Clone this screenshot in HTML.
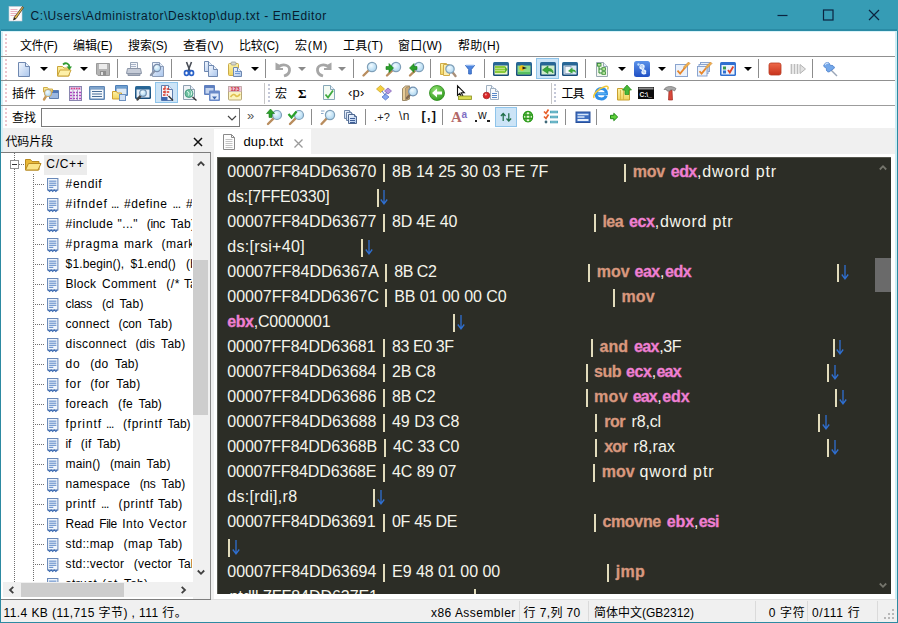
<!DOCTYPE html>
<html><head><meta charset="utf-8"><title>EmEditor</title>
<style>html,body{margin:0;padding:0}body{width:898px;height:623px;position:relative;overflow:hidden;background:#fff;font-family:"Liberation Sans","Noto Sans CJK SC",sans-serif}svg{display:block;overflow:visible}</style>
</head><body>

<svg width="0" height="0" style="position:absolute"><defs>
<linearGradient id="gDoc" x1="0" y1="0" x2="1" y2="1"><stop offset="0" stop-color="#f4f8fe"/><stop offset="1" stop-color="#a9c5ec"/></linearGradient>
<linearGradient id="gFold" x1="0" y1="0" x2="0" y2="1"><stop offset="0" stop-color="#fdf2a6"/><stop offset="1" stop-color="#f0d45e"/></linearGradient>
<linearGradient id="gWin" x1="0" y1="0" x2="0" y2="1"><stop offset="0" stop-color="#2a6a9a"/><stop offset="1" stop-color="#174a78"/></linearGradient>
<linearGradient id="gGreen" x1="0" y1="0" x2="0" y2="1"><stop offset="0" stop-color="#9be08a"/><stop offset="1" stop-color="#3fae3a"/></linearGradient>
<linearGradient id="gBlue" x1="0" y1="0" x2="0" y2="1"><stop offset="0" stop-color="#5b93ea"/><stop offset="1" stop-color="#1f4fc4"/></linearGradient>
<linearGradient id="gRed" x1="0" y1="0" x2="0" y2="1"><stop offset="0" stop-color="#ee6a4a"/><stop offset="1" stop-color="#c8321c"/></linearGradient>
<radialGradient id="gLens" cx="0.4" cy="0.35" r="0.7"><stop offset="0" stop-color="#f2fbff"/><stop offset="1" stop-color="#a8d4f0"/></radialGradient>
<radialGradient id="gBall" cx="0.4" cy="0.3" r="0.8"><stop offset="0" stop-color="#8fe070"/><stop offset="1" stop-color="#2a9418"/></radialGradient>
</defs></svg>

<div style="position:absolute;left:0px;top:0px;width:898px;height:623px;background:#369cb5;"></div>
<div style="position:absolute;left:0px;top:31px;width:898px;height:592px;background:#2d8aa2;"></div>
<div style="position:absolute;left:1px;top:31px;width:896px;height:590.5px;background:#ffffff;"></div>
<div style="position:absolute;left:1px;top:31px;width:1.5px;height:590.5px;background:#d4f0f7;"></div>
<svg style="position:absolute;left:8px;top:6px" width="16" height="16" viewBox="0 0 16 16"><rect x="1" y="0.500" width="13" height="14.500" fill="#fbfbfb" stroke="#c8ccd8" stroke-width=".6"/><path d="M2.500 3.500h7M2.500 5.500h7M2.500 7.500h6M2.500 9.500h5" stroke="#e8a8b8" stroke-width=".9"/><path d="M14.500 .5l1 1.200-7.500 11-2.500 1.300.8-2.800z" fill="#e8b84a" stroke="#4a3a2a" stroke-width=".8"/><path d="M5.500 14l2.500-1.300-1.700-1.500z" fill="#222"/></svg>
<span style='position:absolute;white-space:pre;left:30.5px;font:normal 12px/1 "Liberation Sans","Noto Sans CJK SC",sans-serif;color:#071a2e;top:10.14px;letter-spacing:0.589px;'>C:\Users\Administrator\Desktop\dup.txt - EmEditor</span>
<svg style="position:absolute;left:777px;top:9px" width="104" height="12" viewBox="0 0 104 12"><g fill="none" stroke="#0b2440" stroke-width="1.200"><path d="M0.500 6.500h10"/><rect x="46.500" y="1" width="9.500" height="10"/><path d="M92 1l10 10M102 1l-10 10"/></g></svg>
<div style="position:absolute;left:1px;top:29px;width:896px;height:2px;background:rgba(20,110,135,0.35);"></div>
<div style="position:absolute;left:1px;top:31px;width:896px;height:1px;background:#d9f3f9;"></div>
<div style="position:absolute;left:5px;top:34px;width:2px;height:21px;background:repeating-linear-gradient(to bottom,#ecc6ce 0 2px,transparent 2px 4px)"></div>
<span style='position:absolute;white-space:pre;left:20px;font:normal 12px/1 "Liberation Sans","Noto Sans CJK SC",sans-serif;color:#000;top:39.64px;letter-spacing:-0.406px;'>文件(F)</span>
<span style='position:absolute;white-space:pre;left:73px;font:normal 12px/1 "Liberation Sans","Noto Sans CJK SC",sans-serif;color:#000;top:39.64px;letter-spacing:-0.111px;'>编辑(E)</span>
<span style='position:absolute;white-space:pre;left:128px;font:normal 12px/1 "Liberation Sans","Noto Sans CJK SC",sans-serif;color:#000;top:39.64px;letter-spacing:-0.111px;'>搜索(S)</span>
<span style='position:absolute;white-space:pre;left:183px;font:normal 12px/1 "Liberation Sans","Noto Sans CJK SC",sans-serif;color:#000;top:39.64px;letter-spacing:0.111px;'>查看(V)</span>
<span style='position:absolute;white-space:pre;left:239px;font:normal 12px/1 "Liberation Sans","Noto Sans CJK SC",sans-serif;color:#000;top:39.64px;letter-spacing:-0.149px;'>比较(C)</span>
<span style='position:absolute;white-space:pre;left:295px;font:normal 12px/1 "Liberation Sans","Noto Sans CJK SC",sans-serif;color:#000;top:39.64px;letter-spacing:0.714px;'>宏(M)</span>
<span style='position:absolute;white-space:pre;left:343px;font:normal 12px/1 "Liberation Sans","Noto Sans CJK SC",sans-serif;color:#000;top:39.64px;letter-spacing:0.149px;'>工具(T)</span>
<span style='position:absolute;white-space:pre;left:398px;font:normal 12px/1 "Liberation Sans","Noto Sans CJK SC",sans-serif;color:#000;top:39.64px;letter-spacing:0.149px;'>窗口(W)</span>
<span style='position:absolute;white-space:pre;left:458px;font:normal 12px/1 "Liberation Sans","Noto Sans CJK SC",sans-serif;color:#000;top:39.64px;letter-spacing:0.295px;'>帮助(H)</span>
<div style="position:absolute;left:1px;top:56px;width:896px;height:1px;background:#909090;"></div>
<div style="position:absolute;left:5px;top:59px;width:2px;height:21px;background:repeating-linear-gradient(to bottom,#ecc6ce 0 2px,transparent 2px 4px)"></div>
<svg style="position:absolute;left:16px;top:61px" width="16" height="16" viewBox="0 0 16 16"><path d="M2.5 1.5h7l4 4v10h-11z" fill="url(#gDoc)" stroke="#6f88b0"/><path d="M9.5 1.5v4h4" fill="#e8f0fb" stroke="#6f88b0"/></svg>
<svg style="position:absolute;left:55.5px;top:61px" width="16" height="16" viewBox="0 0 16 16"><path d="M1.5 5.5h5l1.5 1.5h5v8h-11.5z" fill="url(#gFold)" stroke="#caa43a"/><path d="M1.5 15l2.5-6h11l-2.5 6z" fill="#fdf0a8" stroke="#caa43a"/><path d="M7 3.5c3-2.5 6-1 6.5 2.5" fill="none" stroke="#2f9a2f" stroke-width="1.8"/><path d="M10.5 5.5h5.5l-2.5 3.5z" fill="#2f9a2f"/></svg>
<svg style="position:absolute;left:95px;top:61px" width="16" height="16" viewBox="0 0 16 16"><path d="M1.5 2.5h13v12h-11.5l-1.5-1.5z" fill="#b4b4b4" stroke="#9a9a9a"/><rect x="4" y="3" width="8" height="5" fill="#ececec"/><rect x="5" y="10" width="6" height="4.5" fill="#8e8e8e"/><rect x="6" y="11" width="2" height="3" fill="#e0e0e0"/></svg>
<svg style="position:absolute;left:125.5px;top:61px" width="16" height="16" viewBox="0 0 16 16"><path d="M4.5 1.5h7v6h-7z" fill="#f4f6fa" stroke="#9aa6b8"/><path d="M1.5 7.500h13l1 5h-15z" fill="#c6ccd8" stroke="#8c96a8"/><path d="M2 12.5h12v2h-12z" fill="#a9b0be" stroke="#8c96a8"/><path d="M5 3.5h5M5 5.500h5" stroke="#a8b4c8"/></svg>
<svg style="position:absolute;left:148.5px;top:61px" width="16" height="16" viewBox="0 0 16 16"><path d="M3.5 1.5h7l4 4v10h-11z" fill="url(#gDoc)" stroke="#8b9cb8"/><path d="M10.5 1.5v4h4" fill="#e8f0fb" stroke="#8b9cb8"/><path d="M5.9 9.45L2 14" stroke="#8b96aa" stroke-width="2.4" stroke-linecap="round"/><circle cx="8" cy="7" r="3.6" fill="url(#gLens)" stroke="#7a8cab" stroke-width="1.2"/></svg>
<svg style="position:absolute;left:180.5px;top:61px" width="16" height="16" viewBox="0 0 16 16"><path d="M5.500 1l3.500 9M10.500 1l-3.500 9" stroke="#4a4f58" stroke-width="1.6" fill="none"/><ellipse cx="5.500" cy="12" rx="2" ry="2.400" fill="none" stroke="#2a62c8" stroke-width="1.7"/><ellipse cx="10.500" cy="12" rx="2" ry="2.400" fill="none" stroke="#2a62c8" stroke-width="1.7"/></svg>
<svg style="position:absolute;left:203px;top:61px" width="16" height="16" viewBox="0 0 16 16"><path d="M1.5 0.5h4l4 4v6h-8z" fill="url(#gDoc)" stroke="#6f88b0"/><path d="M5.5 0.5v4h4" fill="#e8f0fb" stroke="#6f88b0"/><path d="M5.5 4.5h5l4 4v7h-9z" fill="url(#gDoc)" stroke="#6f88b0"/><path d="M10.5 4.5v4h4" fill="#e8f0fb" stroke="#6f88b0"/></svg>
<svg style="position:absolute;left:226.5px;top:61px" width="16" height="16" viewBox="0 0 16 16"><rect x="1.500" y="2.500" width="10" height="12" rx="1" fill="url(#gFold)" stroke="#c9aa4a"/><rect x="4" y="1" width="5" height="3" rx="1" fill="#d8d8d0" stroke="#9a9a90" stroke-width=".8"/><path d="M6.5 6.5h4l4 4v5h-8z" fill="url(#gDoc)" stroke="#6f88b0"/><path d="M10.5 6.5v4h4" fill="#e8f0fb" stroke="#6f88b0"/><path d="M8 10.500h5M8 12.500h5" stroke="#6f9ad8"/></svg>
<svg style="position:absolute;left:274.5px;top:61px" width="16" height="16" viewBox="0 0 16 16"><g ><path d="M3.500 6c4.500-3.800 11.500-2 11 3.500c-.3 2.800-3 4.800-5.500 5.500" fill="none" stroke="#a6a6a6" stroke-width="2.800"/><path d="M.5 1.500v7.500h7.500v-2h-4l2-2.500z" fill="#a6a6a6"/></g></svg>
<svg style="position:absolute;left:315.5px;top:61px" width="16" height="16" viewBox="0 0 16 16"><g transform="translate(16 0) scale(-1 1)"><path d="M3.500 6c4.500-3.800 11.500-2 11 3.500c-.3 2.800-3 4.800-5.500 5.500" fill="none" stroke="#a6a6a6" stroke-width="2.800"/><path d="M.5 1.500v7.500h7.500v-2h-4l2-2.500z" fill="#a6a6a6"/></g></svg>
<svg style="position:absolute;left:361.5px;top:61px" width="16" height="16" viewBox="0 0 16 16"><path d="M7.025 8.975L1.5 14.5" stroke="#b98d5e" stroke-width="2.4" stroke-linecap="round"/><circle cx="10" cy="6" r="4.6" fill="url(#gLens)" stroke="#7f9fb8" stroke-width="1.2"/></svg>
<svg style="position:absolute;left:384.5px;top:61px" width="16" height="16" viewBox="0 0 16 16"><path d="M7.85 8.975L2 14.5" stroke="#b98d5e" stroke-width="2.4" stroke-linecap="round"/><circle cx="11" cy="6" r="4.6" fill="url(#gLens)" stroke="#7f9fb8" stroke-width="1.2"/><path d="M1 5.500h3v-3l4.500 4.500-4.500 4.500v-3h-3z" fill="#2aa02a" stroke="#167a16" stroke-width=".6"/></svg>
<svg style="position:absolute;left:407.5px;top:61px" width="16" height="16" viewBox="0 0 16 16"><path d="M7.85 8.975L2 14.5" stroke="#b98d5e" stroke-width="2.4" stroke-linecap="round"/><circle cx="11" cy="6" r="4.6" fill="url(#gLens)" stroke="#7f9fb8" stroke-width="1.2"/><path d="M9 5.500h-3v-3l-4.500 4.500 4.500 4.500v-3h3z" fill="#2aa02a" stroke="#167a16" stroke-width=".6"/></svg>
<svg style="position:absolute;left:439.5px;top:61px" width="16" height="16" viewBox="0 0 16 16"><path d="M.5 2.500h6v11h-6z" fill="url(#gFold)" stroke="#d0ac48"/><path d="M3.500 3.500h6v11h-6z" fill="#fbeeb0" stroke="#d0ac48"/><path d="M11.925 10.45L15.5 15" stroke="#a88e78" stroke-width="2.4" stroke-linecap="round"/><circle cx="10" cy="8" r="4.2" fill="url(#gLens)" stroke="#7f9fb8" stroke-width="1.2"/></svg>
<svg style="position:absolute;left:462px;top:61px" width="16" height="16" viewBox="0 0 16 16"><path d="M3.500 4.500h9l-3.200 4v4.500h-2.600v-4.500z" fill="#4d86e0" stroke="#2f62b8" stroke-width=".9"/><path d="M4 4.300h8" stroke="#9cc0f5" stroke-width="1.200"/></svg>
<svg style="position:absolute;left:493px;top:61px" width="16" height="16" viewBox="0 0 16 16"><rect x="0" y="1" width="16" height="14" rx="1.5" fill="url(#gWin)"/><rect x="1.5" y="4.5" width="13" height="9" fill="#eaf6c8"/><path d="M2 6h10M2 8.500h10M2 11h10" stroke="#8ccc3a" stroke-width="1.800"/><path d="M12 5v7l2.500-3.500z" fill="#58b030"/></svg>
<svg style="position:absolute;left:516px;top:61px" width="16" height="16" viewBox="0 0 16 16"><rect x="0" y="1" width="16" height="14" rx="1.5" fill="url(#gWin)"/><rect x="1.5" y="4.5" width="13" height="9" fill="#8fdc8a"/><circle cx="6" cy="7" r="2.700" fill="#f2c21a"/><path d="M6.500 5.500l4.500 1.500-4.500 1.500z" fill="#222"/><path d="M2 11h12v2h-12z" fill="#58c060"/></svg>
<svg style="position:absolute;left:562px;top:61px" width="16" height="16" viewBox="0 0 16 16"><rect x="0" y="1" width="16" height="14" rx="1.5" fill="url(#gWin)"/><rect x="1.5" y="4.5" width="13" height="9" fill="#d8e6f2"/><rect x="3" y="5.500" width="6" height="7" fill="#f4f8fc" stroke="#8aa0ba" stroke-width=".8"/><path d="M6 10l4.500-3.500v2c2.500 0 3.500 1 3.500 3.500-1-1-1.800-1.400-3.500-1.400v2z" fill="#3aa83a"/></svg>
<svg style="position:absolute;left:594px;top:61px" width="16" height="16" viewBox="0 0 16 16"><path d="M2.5 1.5h7l4 4v10h-11z" fill="#f2f6ee" stroke="#98a8b0"/><path d="M9.5 1.5v4h4" fill="#e8f0fb" stroke="#98a8b0"/><path d="M5 4v8h3M5 8h3" fill="none" stroke="#2c8a2c"/><rect x="3.500" y="2.500" width="3.500" height="2.600" fill="#bfe8a0" stroke="#2c8a2c" stroke-width=".8"/><rect x="8" y="6.700" width="3.500" height="2.600" fill="#bfe8a0" stroke="#2c8a2c" stroke-width=".8"/><rect x="8" y="10.700" width="3.500" height="2.600" fill="#bfe8a0" stroke="#2c8a2c" stroke-width=".8"/></svg>
<svg style="position:absolute;left:634px;top:61px" width="16" height="16" viewBox="0 0 16 16"><rect x="0" y="0" width="16" height="16" rx="2.500" fill="url(#gBlue)"/><path d="M6 4.500c2-1.500 4.500-.5 4 1.500h-4c0 2 2.500 2.500 4 1.200M8 9.500c2-1 4 0 3.500 1.500h-3.500c0 2 2.500 2.200 4 1" fill="none" stroke="#e8f4ff" stroke-width="1.500"/><circle cx="4.500" cy="3.500" r="1.200" fill="#bfe0ff"/></svg>
<svg style="position:absolute;left:673.5px;top:61px" width="16" height="16" viewBox="0 0 16 16"><rect x="1.5" y="3.5" width="12" height="12" fill="#eaf1fb" stroke="#8aa4cf"/><path d="M3.5 9.600000000000001l2.64 3.0l5.4-6.6000000000000005" fill="none" stroke="#e8862a" stroke-width="1.800"/><path d="M10 5.500l4.500-4.500 1.500 1.500-4.500 4.500-2 .5z" fill="#f2b04a" stroke="#c8843a" stroke-width=".6"/></svg>
<svg style="position:absolute;left:695.5px;top:61px" width="16" height="16" viewBox="0 0 16 16"><rect x="4.5" y="1.5" width="9" height="9" fill="#eaf1fb" stroke="#8aa4cf"/><path d="M6.5 5.95l1.98 2.25l4.05-4.95" fill="none" stroke="#e8862a" stroke-width="1.800"/><rect x="3.0" y="3.5" width="9" height="9" fill="#eaf1fb" stroke="#8aa4cf"/><path d="M5.0 7.95l1.98 2.25l4.05-4.95" fill="none" stroke="#e8862a" stroke-width="1.800"/><rect x="1.5" y="5.5" width="9.5" height="9.5" fill="#eaf1fb" stroke="#8aa4cf"/><path d="M3.5 10.225000000000001l2.09 2.375l4.275-5.2250000000000005" fill="none" stroke="#e8862a" stroke-width="1.800"/><path d="M10 5.500l4.500-4.500 1.500 1.500-4.500 4.500-2 .5z" fill="#f2b04a" stroke="#c8843a" stroke-width=".6"/></svg>
<svg style="position:absolute;left:720px;top:61px" width="16" height="16" viewBox="0 0 16 16"><rect x="0" y="1" width="16" height="14" rx="1.500" fill="#2f6fd0"/><rect x="1.500" y="4" width="13" height="9.500" fill="#eaf2fc"/><rect x="3" y="5.500" width="3" height="3" fill="#3a9a4a"/><rect x="3" y="9.500" width="3" height="3" fill="#2f6fd0"/><path d="M8 9l1.800 2.500 3.500-6" fill="none" stroke="#e0452a" stroke-width="1.800"/></svg>
<svg style="position:absolute;left:767px;top:61px" width="16" height="16" viewBox="0 0 16 16"><rect x="2" y="2" width="12" height="12" rx="2" fill="url(#gRed)" stroke="#b83a22" stroke-width=".8"/></svg>
<svg style="position:absolute;left:789.5px;top:61px" width="16" height="16" viewBox="0 0 16 16"><path d="M1.500 3v10M4.500 3v10M7.500 3v10" stroke="#bcbcbc" stroke-width="1.700"/><path d="M10 3.500l5.500 4.500-5.500 4.500z" fill="#e2e2e2" stroke="#b4b4b4"/></svg>
<svg style="position:absolute;left:821.5px;top:61px" width="16" height="16" viewBox="0 0 16 16"><path d="M9 9l6 6" stroke="#9aa6b8" stroke-width="1.400"/><path d="M2 4c1-2.500 3.500-3 5-2l1.500 2.500c2-.5 3.500.5 4 2.500l-5.500 4c-2 0-3-1.500-2.500-3.500l-2-1.500c-1-.5-1-1.500-.5-2z" fill="#74a8ea" stroke="#4a7cc8" stroke-width=".8"/><path d="M3 4c1-1.500 2.500-2 3.500-1.500" stroke="#cfe2fa" stroke-width="1.200" fill="none"/></svg>
<div style="position:absolute;left:536px;top:58px;width:23px;height:21px;background:#cce4f7;box-sizing:border-box;border:1px solid #8fc4ea"></div>
<svg style="position:absolute;left:540px;top:61px" width="16" height="16" viewBox="0 0 16 16"><rect x="0" y="1" width="16" height="14" rx="1.5" fill="url(#gWin)"/><rect x="1.5" y="4.5" width="13" height="9" fill="#cfeccc"/><path d="M2.500 9l5.500-4v2.500c4 0 5 1.500 5 4.500-1-1.500-2-2-5-2v2.500z" fill="#3aa83a" stroke="#1f7f2a" stroke-width=".6"/></svg>
<svg style="position:absolute;left:39.7px;top:66.7px" width="8" height="4" viewBox="0 0 8 4"><path d="M0 0h8l-4 4z" fill="#000"/></svg>
<svg style="position:absolute;left:80px;top:66.7px" width="8" height="4" viewBox="0 0 8 4"><path d="M0 0h8l-4 4z" fill="#000"/></svg>
<svg style="position:absolute;left:250.8px;top:66.7px" width="8" height="4" viewBox="0 0 8 4"><path d="M0 0h8l-4 4z" fill="#000"/></svg>
<svg style="position:absolute;left:298.3px;top:66.7px" width="8" height="4" viewBox="0 0 8 4"><path d="M0 0h8l-4 4z" fill="#8a8a8a"/></svg>
<svg style="position:absolute;left:338px;top:66.7px" width="8" height="4" viewBox="0 0 8 4"><path d="M0 0h8l-4 4z" fill="#8a8a8a"/></svg>
<svg style="position:absolute;left:617.5px;top:66.7px" width="8" height="4" viewBox="0 0 8 4"><path d="M0 0h8l-4 4z" fill="#000"/></svg>
<svg style="position:absolute;left:657.5px;top:66.7px" width="8" height="4" viewBox="0 0 8 4"><path d="M0 0h8l-4 4z" fill="#000"/></svg>
<svg style="position:absolute;left:743.5px;top:66.7px" width="8" height="4" viewBox="0 0 8 4"><path d="M0 0h8l-4 4z" fill="#000"/></svg>
<div style="position:absolute;left:117px;top:59px;width:1px;height:19px;background:#8c8c8c;"></div>
<div style="position:absolute;left:171px;top:59px;width:1px;height:19px;background:#8c8c8c;"></div>
<div style="position:absolute;left:264.8px;top:59px;width:1px;height:19px;background:#8c8c8c;"></div>
<div style="position:absolute;left:352.8px;top:59px;width:1px;height:19px;background:#8c8c8c;"></div>
<div style="position:absolute;left:430px;top:59px;width:1px;height:19px;background:#8c8c8c;"></div>
<div style="position:absolute;left:484.2px;top:59px;width:1px;height:19px;background:#8c8c8c;"></div>
<div style="position:absolute;left:584.5px;top:59px;width:1px;height:19px;background:#8c8c8c;"></div>
<div style="position:absolute;left:758.1px;top:59px;width:1px;height:19px;background:#8c8c8c;"></div>
<div style="position:absolute;left:812px;top:59px;width:1px;height:19px;background:#8c8c8c;"></div>
<div style="position:absolute;left:1px;top:80px;width:896px;height:1px;background:#909090;"></div>
<div style="position:absolute;left:5px;top:84px;width:2px;height:20px;background:repeating-linear-gradient(to bottom,#ecc6ce 0 2px,transparent 2px 4px)"></div>
<span style='position:absolute;white-space:pre;left:12px;font:normal 12px/1 "Liberation Sans","Noto Sans CJK SC",sans-serif;color:#000;top:88.04px;letter-spacing:-0.010px;'>插件</span>
<svg style="position:absolute;left:42.5px;top:85px" width="16" height="16" viewBox="0 0 16 16"><path d="M6.500 5.500h9v8h-9z" fill="#9cb8e0" stroke="#5f7fb0"/><path d="M7 6h8v2h-8z" fill="#4f78b8"/><path d="M.5 2.500h4l1 1.500h4v3h-9z" fill="url(#gFold)" stroke="#d0ac48"/><path d="M3.6 10.275L1 14.5" stroke="#c89858" stroke-width="2.4" stroke-linecap="round"/><circle cx="5" cy="8" r="3.5" fill="url(#gLens)" stroke="#c8a868" stroke-width="1.2"/></svg>
<svg style="position:absolute;left:66.5px;top:85px" width="16" height="16" viewBox="0 0 16 16"><rect x="2.500" y="1.500" width="12" height="14" fill="#f6eefa" stroke="#8a86b0"/><path d="M3 2h11v3h-11z" fill="#d8c0e8"/><path d="M3 7.500h11M3 10.500h11M3 13.500h11" stroke="#b040c0" stroke-width="1.300" stroke-dasharray="2 1"/><path d="M6 5v10M10.500 5v10" stroke="#8a86b0" stroke-width=".7"/><path d="M4 3.500h9" stroke="#e04080" stroke-width="1.400" stroke-dasharray="1.500 1"/></svg>
<svg style="position:absolute;left:89px;top:85px" width="16" height="16" viewBox="0 0 16 16"><rect x="0" y="1" width="16" height="14" rx="1.2" fill="#5f86b4"/><rect x="1" y="2" width="14" height="2" fill="#7fa4cc"/><rect x="1.5" y="4.5" width="13" height="9" fill="#f4f8fc"/><path d="M3 6.500h10M3 9h10M3 11.500h10" stroke="#4a6e98" stroke-width="1.100"/></svg>
<svg style="position:absolute;left:112px;top:85px" width="16" height="16" viewBox="0 0 16 16"><rect x="3" y="0" width="13" height="11" rx="1.2" fill="#4f7fb8"/><rect x="4" y="1" width="11" height="2" fill="#6fa0d0"/><rect x="4.5" y="3.5" width="10" height="6" fill="#dce9f5"/><path d="M.5 6.500h4l1 1.500h4v6h-9z" fill="url(#gFold)" stroke="#d0a030"/><rect x="7.500" y="9.500" width="6" height="6" fill="#cfe0f4" stroke="#6f92c0"/></svg>
<svg style="position:absolute;left:134.5px;top:85px" width="16" height="16" viewBox="0 0 16 16"><rect x="0" y="1" width="16" height="13" rx="1.5" fill="url(#gWin)"/><rect x="1.5" y="4.5" width="13" height="8" fill="#e4eef8"/><path d="M6.075 10.275L2.5 14.5" stroke="#444" stroke-width="2.4" stroke-linecap="round"/><circle cx="8" cy="8" r="3.3" fill="url(#gLens)" stroke="#6f8fb0" stroke-width="1.2"/></svg>
<svg style="position:absolute;left:181.5px;top:85px" width="16" height="16" viewBox="0 0 16 16"><path d="M1.5 0.5h7l4 4v10h-11z" fill="#eef2f6" stroke="#8fa0b0"/><path d="M8.5 0.5v4h4" fill="#e8f0fb" stroke="#8fa0b0"/><circle cx="7" cy="8.500" r="4" fill="#6cc0a0" stroke="#3f9078" stroke-width=".8"/><path d="M5 6.500c2 .5 2.500 2 1.500 4M8.500 5.500c1.500 1 1.500 3 .5 5" stroke="#e8fff4" stroke-width="1" fill="none"/><path d="M10.500 12l4 3.500" stroke="#333" stroke-width="1.400"/></svg>
<svg style="position:absolute;left:204px;top:85px" width="16" height="16" viewBox="0 0 16 16"><rect x="0" y="0" width="11" height="10" rx="1" fill="#5f80c0"/><rect x="1.500" y="3" width="8" height="5.500" fill="#c4d4ee"/><rect x="5" y="5.500" width="11" height="10.500" rx="1" fill="#6a8ac8"/><rect x="6.500" y="8.500" width="8" height="6" fill="#e0eafa"/><path d="M8 11.500h5l-2.500 3z" fill="#3f68b0"/></svg>
<svg style="position:absolute;left:227px;top:85px" width="16" height="16" viewBox="0 0 16 16"><rect x="1.500" y="1.500" width="13" height="13.500" rx="1" fill="#fbf3c0" stroke="#b8a878"/><rect x="1.500" y="1.500" width="13" height="5" fill="#f4c8d8" stroke="#b8a0a8" stroke-width=".6"/><text x="8" y="6.200" font-family="Liberation Sans,sans-serif" font-size="5.500" font-weight="bold" fill="#c0283a" text-anchor="middle">123</text><path d="M3.500 12c2-3 4-3 5-1.500s3 1 4.500-1.500" fill="none" stroke="#e0c050" stroke-width="1.600"/></svg>
<svg style="position:absolute;left:320.5px;top:85px" width="16" height="16" viewBox="0 0 16 16"><path d="M2.5 0.5h7l4 4v10h-11z" fill="#f4fbf4" stroke="#88a8b8"/><path d="M9.5 0.5v4h4" fill="#e8f0fb" stroke="#88a8b8"/><path d="M4.500 9.500l2.500 3 5-7" fill="none" stroke="#3faa3f" stroke-width="1.800"/></svg>
<svg style="position:absolute;left:375.5px;top:85px" width="16" height="16" viewBox="0 0 16 16"><path d="M4.500 .5l4 3.500-4 3.500-4-3.500z" fill="#f4d040" stroke="#c8a020" stroke-width=".7"/><path d="M12 3l3.500 3-3.500 3-3.500-3z" fill="#b898e0" stroke="#7858b0" stroke-width=".7"/><path d="M9.500 9l3.500 3-3.500 3-3.500-3z" fill="#88a8f0" stroke="#4868c0" stroke-width=".7"/><path d="M6 6l3 4M10.500 7.500l-1 2" stroke="#5878c8" stroke-width="1"/></svg>
<svg style="position:absolute;left:401.5px;top:85px" width="16" height="16" viewBox="0 0 16 16"><path d="M.5 3.500l3-2.500h4v13l-4 1.500h-3z" fill="#e8cc98" stroke="#9a8868"/><path d="M3.500 3l4-2v13l-4 1.500z" fill="#c8a878" stroke="#9a8868" stroke-width=".7"/><path d="M8.9 8.775L5 13" stroke="#806850" stroke-width="2.4" stroke-linecap="round"/><circle cx="11" cy="6.5" r="4.3" fill="url(#gLens)" stroke="#7090b0" stroke-width="1.2"/></svg>
<svg style="position:absolute;left:428.7px;top:85px" width="16" height="16" viewBox="0 0 16 16"><circle cx="8" cy="8" r="7.500" fill="url(#gBall)" stroke="#2a8a18" stroke-width=".8"/><path d="M3 8l5-4.500v3h5v3h-5v3z" fill="#fff"/></svg>
<svg style="position:absolute;left:455.5px;top:85px" width="16" height="16" viewBox="0 0 16 16"><path d="M1.500 .8v9.500l2.300-2 1.700 3.700 1.500-.7-1.700-3.600h3z" fill="#fff" stroke="#111" stroke-width="1.100"/><rect x="2.500" y="11" width="13" height="3.500" fill="#d8dc50" stroke="#8a9020" stroke-width=".8"/></svg>
<svg style="position:absolute;left:483.3px;top:85px" width="16" height="16" viewBox="0 0 16 16"><path d="M3.5 0.5h5l3 3v7h-8z" fill="#f8fafc" stroke="#a0b0c0"/><path d="M8.5 0.5v3h3" fill="#e8f0fb" stroke="#a0b0c0"/><path d="M7.5 3.5h5l3 3v8h-8z" fill="#f8fafc" stroke="#a0b0c0"/><path d="M12.5 3.5v3h3" fill="#e8f0fb" stroke="#a0b0c0"/><path d="M9 8.500h5M9 10.500h5M9 12.500h5" stroke="#5888c8"/><circle cx="3.500" cy="10.500" r="3.300" fill="#d8282a" stroke="#a01818" stroke-width=".7"/><circle cx="2.800" cy="9.500" r="1" fill="#f8a0a0"/></svg>
<svg style="position:absolute;left:592.5px;top:85px" width="16" height="16" viewBox="0 0 16 16"><path d="M4.200 8.700h9.300c.3-7-10.500-7-10.500 0c0 6.500 8.500 6.500 10.200 2" fill="none" stroke="#2f8fe8" stroke-width="3"/><path d="M4.200 8.700h9.300" stroke="#5fb4f4" stroke-width="1.200"/><path d="M1 13c-1.500-3 4-9.500 11-11.500c3-.8 4 .8 2.500 3" fill="none" stroke="#f0c83a" stroke-width="1.500"/></svg>
<svg style="position:absolute;left:616px;top:85px" width="16" height="16" viewBox="0 0 16 16"><path d="M1.500 3.500h5l1 1.500h6v10h-12z" fill="url(#gFold)" stroke="#c8a030"/><path d="M4.500 5v10M7.500 5v10" stroke="#d8b040" stroke-width=".8"/><path d="M11 0l4.500 5h-2.500v4.500h-4v-4.500h-2.500z" fill="#48b838" stroke="#2a8a20" stroke-width=".7"/></svg>
<svg style="position:absolute;left:638px;top:85px" width="16" height="16" viewBox="0 0 16 16"><rect x="0" y="2" width="16" height="12" fill="#0c0c0c"/><rect x=".5" y="2.500" width="15" height="2" fill="#8a8a8a"/><text x="1.500" y="11.800" font-family="Liberation Sans,sans-serif" font-size="6.500" font-weight="bold" fill="#f4f4f4">C:\_</text></svg>
<svg style="position:absolute;left:661.5px;top:85px" width="16" height="16" viewBox="0 0 16 16"><path d="M7 5h3l.5 10h-4z" fill="#d8483a" stroke="#a02a20" stroke-width=".7"/><path d="M2 4.500c2-3.500 8-4 12-1l-1.500 2.500c-1.500-1.200-3-1.500-4-1.200l-.5 1.200h-3l-.5-1.500z" fill="#a8a8a8" stroke="#707070" stroke-width=".7"/></svg>
<div style="position:absolute;left:155px;top:82px;width:23px;height:21px;background:#cce4f7;box-sizing:border-box;border:1px solid #8fc4ea"></div>
<svg style="position:absolute;left:158.5px;top:85px" width="16" height="16" viewBox="0 0 16 16"><path d="M2.5 0.5h7l4 4v11h-11z" fill="#f4f6fb" stroke="#5f7fb0"/><path d="M9.5 0.5v4h4" fill="#e8f0fb" stroke="#5f7fb0"/><path d="M4 4h7M4 7h7M4 10h5" stroke="#d83a2a" stroke-width="1.600" stroke-dasharray="2.500 1.200"/><rect x="2.500" y="12" width="6" height="3.500" fill="#3f68b0"/><path d="M9.500 11l4.500 4.500" stroke="#333" stroke-width="1.400"/><path d="M6 1v3M6 5.500v3" stroke="#d83a2a" stroke-width="1.200"/></svg>
<div style="position:absolute;left:264px;top:83px;width:1px;height:21px;background:#c6c6c6;"></div>
<div style="position:absolute;left:268px;top:84px;width:2px;height:20px;background:repeating-linear-gradient(to bottom,#c4c8d8 0 2px,transparent 2px 4px)"></div>
<span style='position:absolute;white-space:pre;left:275px;font:normal 12px/1 "Liberation Sans","Noto Sans CJK SC",sans-serif;color:#000;top:88.04px;letter-spacing:-0.016px;'>宏</span>
<span style='position:absolute;white-space:pre;left:298px;font:bold 13px/1 "Liberation Serif",serif;color:#000;top:86.91px;letter-spacing:-0.700px;'>Σ</span>
<span style='position:absolute;white-space:pre;left:348px;font:normal 13px/1 "Liberation Sans","Noto Sans CJK SC",sans-serif;color:#111;top:86.00px;letter-spacing:0.164px;'>‹p›</span>
<div style="position:absolute;left:550.5px;top:83px;width:1px;height:21px;background:#c6c6c6;"></div>
<div style="position:absolute;left:554px;top:84px;width:2px;height:20px;background:repeating-linear-gradient(to bottom,#c4c8d8 0 2px,transparent 2px 4px)"></div>
<span style='position:absolute;white-space:pre;left:561.5px;font:normal 12px/1 "Liberation Sans","Noto Sans CJK SC",sans-serif;color:#000;top:88.04px;letter-spacing:-1.010px;'>工具</span>
<div style="position:absolute;left:1px;top:105px;width:896px;height:1px;background:#9c9c9c;"></div>
<div style="position:absolute;left:5px;top:108px;width:2px;height:19px;background:repeating-linear-gradient(to bottom,#ecc6ce 0 2px,transparent 2px 4px)"></div>
<span style='position:absolute;white-space:pre;left:12px;font:normal 12px/1 "Liberation Sans","Noto Sans CJK SC",sans-serif;color:#000;top:112.04px;letter-spacing:-0.010px;'>查找</span>
<div style="position:absolute;left:40.5px;top:107.5px;width:199.5px;height:19.5px;background:#fff;box-sizing:border-box;border:1px solid #7a7a7a"></div>
<svg style="position:absolute;left:226.5px;top:114.5px" width="10" height="6" viewBox="0 0 10 6"><path d="M1 1l4 4 4-4" fill="none" stroke="#444" stroke-width="1.200"/></svg>
<span style='position:absolute;white-space:pre;left:247px;font:normal 13px/1 "Liberation Sans","Noto Sans CJK SC",sans-serif;color:#555;top:109.00px;letter-spacing:-0.234px;'>»</span>
<svg style="position:absolute;left:265.5px;top:109px" width="16" height="16" viewBox="0 0 16 16"><path d="M7.85 9.15L2 15" stroke="#b98d5e" stroke-width="2.4" stroke-linecap="round"/><circle cx="11" cy="6" r="4.5" fill="url(#gLens)" stroke="#7f9fb8" stroke-width="1.2"/><path d="M4.500 0l4 4.500h-2.500v4h-3v-4h-2.500z" fill="#2aa02a" stroke="#167a16" stroke-width=".6"/></svg>
<svg style="position:absolute;left:288px;top:109px" width="16" height="16" viewBox="0 0 16 16"><path d="M7.85 9.15L2 15" stroke="#b98d5e" stroke-width="2.4" stroke-linecap="round"/><circle cx="11" cy="6" r="4.5" fill="url(#gLens)" stroke="#7f9fb8" stroke-width="1.2"/><path d="M.5 5l3 3.500 5-6" fill="none" stroke="#2aa02a" stroke-width="2.200"/></svg>
<svg style="position:absolute;left:319.5px;top:109px" width="16" height="16" viewBox="0 0 16 16"><path d="M7.025 9.15L1.5 15" stroke="#b98d5e" stroke-width="2.4" stroke-linecap="round"/><circle cx="10" cy="6" r="4.6" fill="url(#gLens)" stroke="#7f9fb8" stroke-width="1.2"/><path d="M1 2h3.500M1 4.500h2.500" stroke="#8aa8c8" stroke-width="1"/></svg>
<svg style="position:absolute;left:343px;top:109px" width="16" height="16" viewBox="0 0 16 16"><path d="M1.5 1.5h5l2 2v6h-7z" fill="url(#gDoc)" stroke="#6f86a8"/><path d="M6.5 1.5v2h2" fill="#e8f0fb" stroke="#6f86a8"/><path d="M3.5 3.5h5l2 2v6h-7z" fill="url(#gDoc)" stroke="#6f86a8"/><path d="M8.5 3.5v2h2" fill="#e8f0fb" stroke="#6f86a8"/><path d="M5.5 5.5h6l2 2v7h-8z" fill="url(#gDoc)" stroke="#4f6890"/><path d="M11.5 5.5v2h2" fill="#e8f0fb" stroke="#4f6890"/><path d="M7 9.500h5M7 11.500h5M7 13.500h5" stroke="#3f5f98" /></svg>
<svg style="position:absolute;left:520px;top:109px" width="16" height="16" viewBox="0 0 16 16"><ellipse cx="8" cy="7.700" rx="4.600" ry="5.200" fill="#e8f8d8" stroke="#2a9a1a" stroke-width="1.300"/><path d="M6 2.800v10M10 2.800v10M3.200 6h9.600M3.200 9.500h9.600" stroke="#2a9a1a" stroke-width="1.300"/></svg>
<svg style="position:absolute;left:543px;top:109px" width="16" height="16" viewBox="0 0 16 16"><path d="M7 3h8M7 8h8M7 13h8" stroke="#3f98b0" stroke-width="2.600"/><path d="M7.500 3h7M7.500 8h7M7.500 13h7" stroke="#a8e0e8" stroke-width=".8"/><path d="M1 2.500l2 2 2.500-4M1 7.500l2 2 2.500-4" fill="none" stroke="#e8602a" stroke-width="1.700"/><circle cx="3" cy="13" r="1.400" fill="#3f6878"/></svg>
<svg style="position:absolute;left:574.5px;top:109px" width="16" height="16" viewBox="0 0 16 16"><rect x="1" y="3" width="14" height="10.500" fill="#3f6fc0" stroke="#28509a"/><path d="M2.500 5.500h11M2.500 8h7" stroke="#d8e8fa" stroke-width="1.300"/><rect x="2.500" y="10" width="11" height="2" fill="#e8f0fa"/></svg>
<svg style="position:absolute;left:605.5px;top:109px" width="16" height="16" viewBox="0 0 16 16"><path d="M4.500 6.300h3.300v-2l3.900 3.700-3.900 3.700v-2h-3.300z" fill="#5fd03a" stroke="#1f8a18" stroke-width="1"/></svg>
<div style="position:absolute;left:310.8px;top:109px;width:1px;height:16px;background:#8c8c8c;"></div>
<div style="position:absolute;left:365px;top:109px;width:1px;height:16px;background:#8c8c8c;"></div>
<div style="position:absolute;left:441.5px;top:109px;width:1px;height:16px;background:#8c8c8c;"></div>
<div style="position:absolute;left:565.1px;top:109px;width:1px;height:16px;background:#8c8c8c;"></div>
<div style="position:absolute;left:596.1px;top:109px;width:1px;height:16px;background:#8c8c8c;"></div>
<span style='position:absolute;white-space:pre;left:374px;font:normal 11px/1 "Liberation Sans","Noto Sans CJK SC",sans-serif;color:#222;top:111.99px;letter-spacing:0.076px;'>.+?</span>
<span style='position:absolute;white-space:pre;left:399px;font:normal 12px/1 "Liberation Sans","Noto Sans CJK SC",sans-serif;color:#222;top:109.64px;letter-spacing:0.323px;'>\n</span>
<span style='position:absolute;white-space:pre;left:421.5px;font:bold 12.5px/1 "Liberation Sans","Noto Sans CJK SC",sans-serif;color:#111;top:109.72px;letter-spacing:1.275px;'>[,]</span>
<span style='position:absolute;white-space:pre;left:451px;font:bold 15px/1 "Liberation Serif",serif;color:#b26868;top:110.44px;letter-spacing:-0.344px;'>A</span>
<span style='position:absolute;white-space:pre;left:461.5px;font:bold 10px/1 "Liberation Sans","Noto Sans CJK SC",sans-serif;color:#7f6fc4;top:109.53px;letter-spacing:0.438px;'>a</span>
<span style='position:absolute;white-space:pre;left:478px;font:normal 12px/1 "Liberation Sans","Noto Sans CJK SC",sans-serif;color:#222;top:109.34px;letter-spacing:-0.672px;'>w</span>
<div style="position:absolute;left:474.5px;top:119.5px;width:2.5px;height:2.5px;background:#222;"></div>
<div style="position:absolute;left:487px;top:119.5px;width:2.5px;height:2.5px;background:#222;"></div>
<div style="position:absolute;left:495px;top:106.5px;width:22px;height:20px;background:#cce4f7;box-sizing:border-box;border:1px solid #8fc4ea"></div>
<svg style="position:absolute;left:497.5px;top:109px" width="16" height="16" viewBox="0 0 16 16"><path d="M5.200 12v-7.500M2.900 7l2.300-2.600 2.300 2.600M10.800 4.300v7.500M8.500 9.500l2.300 2.600 2.300-2.600" fill="none" stroke="#1f6e48" stroke-width="1.250"/></svg>
<div style="position:absolute;left:2.5px;top:127.5px;width:893px;height:26.5px;background:#f0f0f0;"></div>
<span style='position:absolute;white-space:pre;left:5.5px;font:normal 12px/1 "Liberation Sans","Noto Sans CJK SC",sans-serif;color:#000;top:135.84px;letter-spacing:-0.147px;'>代码片段</span>
<svg style="position:absolute;left:193px;top:137px" width="10" height="10" viewBox="0 0 10 10"><path d="M1 1l8 8M9 1l-8 8" stroke="#111" stroke-width="1.500"/></svg>
<div style="position:absolute;left:1px;top:152px;width:210px;height:448px;background:#fff;box-sizing:border-box;border-top:1px solid #7c7c7c;border-right:1px solid #8c8c8c;border-bottom:1px solid #828282"></div>
<div style="position:absolute;left:211px;top:153px;width:3px;height:446px;background:#f0f0f0;"></div>
<div style="position:absolute;left:1px;top:153px;width:191px;height:428.5px;overflow:hidden">
<div style="position:absolute;left:13px;top:0px;width:1px;height:7px;background:repeating-linear-gradient(to bottom,#707070 0 1px,transparent 1px 2px);"></div>
<div style="position:absolute;left:13px;top:16px;width:1px;height:430px;background:repeating-linear-gradient(to bottom,#707070 0 1px,transparent 1px 2px);"></div>
<div style="position:absolute;left:32px;top:21px;width:1px;height:420px;background:repeating-linear-gradient(to bottom,#707070 0 1px,transparent 1px 2px);"></div>
<div style="position:absolute;left:18px;top:11px;width:6px;height:1px;background:repeating-linear-gradient(to right,#707070 0 1px,transparent 1px 2px);"></div>
<div style="position:absolute;left:42.5px;top:1.5px;width:43.5px;height:20px;background:#ececec;"></div>
<svg style="position:absolute;left:9px;top:7px" width="9" height="9" viewBox="0 0 9 9"><rect x=".5" y=".5" width="8" height="8" fill="#fff" stroke="#919191"/><path d="M2 4.500h5" stroke="#333"/></svg>
<svg style="position:absolute;left:24px;top:3px" width="17" height="16" viewBox="0 0 17 16"><path d="M.5 3.500h5l1.500 2h7v8.500h-13.500z" fill="#e8b838" stroke="#b88a20"/><path d="M.5 14l3-6.500h12.500l-3 6.500z" fill="#fbe488" stroke="#b88a20"/></svg>
<span style='position:absolute;white-space:pre;left:45.3px;font:normal 12px/1 "Liberation Sans","Noto Sans CJK SC",sans-serif;color:#000;top:5.34px;letter-spacing:0.669px;'>C/C++</span>
<div style="position:absolute;left:34px;top:31px;width:10px;height:1px;background:repeating-linear-gradient(to right,#707070 0 1px,transparent 1px 2px);"></div>
<svg style="position:absolute;left:44.5px;top:24px" width="14.5" height="15.5" viewBox="0 0 14 15"><path d="M1.500 1.500h10v11h-10z" fill="#f0f6fd" stroke="#6888b8"/><path d="M3 4h7M3 6h7M3 8h7M3 10h4" stroke="#4878c0" stroke-width=".9"/><path d="M2 12.500l1.500 1.500 1.500-1.500 1.500 1.500 1.500-1.500 1.500 1.500 1.500-1.500" stroke="#3868b0" fill="none"/></svg>
<span style='position:absolute;white-space:pre;left:64.6px;font:normal 12px/1 "Liberation Sans","Noto Sans CJK SC",sans-serif;color:#000;top:25.34px;letter-spacing:0.672px;'>#endif</span>
<div style="position:absolute;left:34px;top:51px;width:10px;height:1px;background:repeating-linear-gradient(to right,#707070 0 1px,transparent 1px 2px);"></div>
<svg style="position:absolute;left:44.5px;top:44px" width="14.5" height="15.5" viewBox="0 0 14 15"><path d="M1.500 1.500h10v11h-10z" fill="#f0f6fd" stroke="#6888b8"/><path d="M3 4h7M3 6h7M3 8h7M3 10h4" stroke="#4878c0" stroke-width=".9"/><path d="M2 12.500l1.500 1.500 1.500-1.500 1.500 1.500 1.500-1.500 1.500 1.500 1.500-1.500" stroke="#3868b0" fill="none"/></svg>
<span style='position:absolute;white-space:pre;left:64.6px;font:normal 12px/1 "Liberation Sans","Noto Sans CJK SC",sans-serif;color:#000;top:45.34px;letter-spacing:0.888px;'>#ifndef</span>
<span style='position:absolute;white-space:pre;left:110px;font:normal 12px/1 "Liberation Sans","Noto Sans CJK SC",sans-serif;color:#000;top:45.34px;letter-spacing:-0.806px;'>...</span>
<span style='position:absolute;white-space:pre;left:122.9px;font:normal 12px/1 "Liberation Sans","Noto Sans CJK SC",sans-serif;color:#000;top:45.34px;letter-spacing:0.604px;'>#define</span>
<span style='position:absolute;white-space:pre;left:171.4px;font:normal 12px/1 "Liberation Sans","Noto Sans CJK SC",sans-serif;color:#000;top:45.34px;letter-spacing:-0.686px;'>...</span>
<span style='position:absolute;white-space:pre;left:185px;font:normal 12px/1 "Liberation Sans","Noto Sans CJK SC",sans-serif;color:#000;top:45.34px;letter-spacing:0.690px;'>#endif</span>
<div style="position:absolute;left:34px;top:71px;width:10px;height:1px;background:repeating-linear-gradient(to right,#707070 0 1px,transparent 1px 2px);"></div>
<svg style="position:absolute;left:44.5px;top:64px" width="14.5" height="15.5" viewBox="0 0 14 15"><path d="M1.500 1.500h10v11h-10z" fill="#f0f6fd" stroke="#6888b8"/><path d="M3 4h7M3 6h7M3 8h7M3 10h4" stroke="#4878c0" stroke-width=".9"/><path d="M2 12.500l1.500 1.500 1.500-1.500 1.500 1.500 1.500-1.500 1.500 1.500 1.500-1.500" stroke="#3868b0" fill="none"/></svg>
<span style='position:absolute;white-space:pre;left:64.6px;font:normal 12px/1 "Liberation Sans","Noto Sans CJK SC",sans-serif;color:#000;top:65.34px;letter-spacing:0.360px;'>#include</span>
<span style='position:absolute;white-space:pre;left:116.5px;font:normal 12px/1 "Liberation Sans","Noto Sans CJK SC",sans-serif;color:#000;top:65.34px;letter-spacing:0.393px;'>"..."</span>
<span style='position:absolute;white-space:pre;left:145.7px;font:normal 12px/1 "Liberation Sans","Noto Sans CJK SC",sans-serif;color:#000;top:65.34px;letter-spacing:-0.270px;'>(inc</span>
<span style='position:absolute;white-space:pre;left:169.8px;font:normal 12px/1 "Liberation Sans","Noto Sans CJK SC",sans-serif;color:#000;top:65.34px;letter-spacing:0.245px;'>Tab)</span>
<div style="position:absolute;left:34px;top:91px;width:10px;height:1px;background:repeating-linear-gradient(to right,#707070 0 1px,transparent 1px 2px);"></div>
<svg style="position:absolute;left:44.5px;top:84px" width="14.5" height="15.5" viewBox="0 0 14 15"><path d="M1.500 1.500h10v11h-10z" fill="#f0f6fd" stroke="#6888b8"/><path d="M3 4h7M3 6h7M3 8h7M3 10h4" stroke="#4878c0" stroke-width=".9"/><path d="M2 12.500l1.500 1.500 1.500-1.500 1.500 1.500 1.500-1.500 1.500 1.500 1.500-1.500" stroke="#3868b0" fill="none"/></svg>
<span style='position:absolute;white-space:pre;left:64.6px;font:normal 12px/1 "Liberation Sans","Noto Sans CJK SC",sans-serif;color:#000;top:85.34px;letter-spacing:0.865px;'>#pragma</span>
<span style='position:absolute;white-space:pre;left:122.9px;font:normal 12px/1 "Liberation Sans","Noto Sans CJK SC",sans-serif;color:#000;top:85.34px;letter-spacing:0.637px;'>mark</span>
<span style='position:absolute;white-space:pre;left:160.4px;font:normal 12px/1 "Liberation Sans","Noto Sans CJK SC",sans-serif;color:#000;top:85.34px;letter-spacing:0.562px;'>(mark</span>
<span style='position:absolute;white-space:pre;left:199px;font:normal 12px/1 "Liberation Sans","Noto Sans CJK SC",sans-serif;color:#000;top:85.34px;letter-spacing:0.188px;'>Tab)</span>
<div style="position:absolute;left:34px;top:111px;width:10px;height:1px;background:repeating-linear-gradient(to right,#707070 0 1px,transparent 1px 2px);"></div>
<svg style="position:absolute;left:44.5px;top:104px" width="14.5" height="15.5" viewBox="0 0 14 15"><path d="M1.500 1.500h10v11h-10z" fill="#f0f6fd" stroke="#6888b8"/><path d="M3 4h7M3 6h7M3 8h7M3 10h4" stroke="#4878c0" stroke-width=".9"/><path d="M2 12.500l1.500 1.500 1.500-1.500 1.500 1.500 1.500-1.500 1.500 1.500 1.500-1.500" stroke="#3868b0" fill="none"/></svg>
<span style='position:absolute;white-space:pre;left:64.6px;font:normal 12px/1 "Liberation Sans","Noto Sans CJK SC",sans-serif;color:#000;top:105.34px;letter-spacing:0.117px;'>$1.begin(),</span>
<span style='position:absolute;white-space:pre;left:129.6px;font:normal 12px/1 "Liberation Sans","Noto Sans CJK SC",sans-serif;color:#000;top:105.34px;letter-spacing:0.080px;'>$1.end()</span>
<span style='position:absolute;white-space:pre;left:185px;font:normal 12px/1 "Liberation Sans","Noto Sans CJK SC",sans-serif;color:#000;top:105.34px;letter-spacing:0.263px;'>(be</span>
<span style='position:absolute;white-space:pre;left:208px;font:normal 12px/1 "Liberation Sans","Noto Sans CJK SC",sans-serif;color:#000;top:105.34px;letter-spacing:0.188px;'>Tab)</span>
<div style="position:absolute;left:34px;top:131px;width:10px;height:1px;background:repeating-linear-gradient(to right,#707070 0 1px,transparent 1px 2px);"></div>
<svg style="position:absolute;left:44.5px;top:124px" width="14.5" height="15.5" viewBox="0 0 14 15"><path d="M1.500 1.500h10v11h-10z" fill="#f0f6fd" stroke="#6888b8"/><path d="M3 4h7M3 6h7M3 8h7M3 10h4" stroke="#4878c0" stroke-width=".9"/><path d="M2 12.500l1.500 1.500 1.500-1.500 1.500 1.500 1.500-1.500 1.500 1.500 1.500-1.500" stroke="#3868b0" fill="none"/></svg>
<span style='position:absolute;white-space:pre;left:64.6px;font:normal 12px/1 "Liberation Sans","Noto Sans CJK SC",sans-serif;color:#000;top:125.34px;letter-spacing:0.257px;'>Block</span>
<span style='position:absolute;white-space:pre;left:101px;font:normal 12px/1 "Liberation Sans","Noto Sans CJK SC",sans-serif;color:#000;top:125.34px;letter-spacing:0.351px;'>Comment</span>
<span style='position:absolute;white-space:pre;left:165.3px;font:normal 12px/1 "Liberation Sans","Noto Sans CJK SC",sans-serif;color:#000;top:125.34px;letter-spacing:0.520px;'>(/*</span>
<span style='position:absolute;white-space:pre;left:182.9px;font:normal 12px/1 "Liberation Sans","Noto Sans CJK SC",sans-serif;color:#000;top:125.34px;letter-spacing:0.216px;'>Tab)</span>
<div style="position:absolute;left:34px;top:151px;width:10px;height:1px;background:repeating-linear-gradient(to right,#707070 0 1px,transparent 1px 2px);"></div>
<svg style="position:absolute;left:44.5px;top:144px" width="14.5" height="15.5" viewBox="0 0 14 15"><path d="M1.500 1.500h10v11h-10z" fill="#f0f6fd" stroke="#6888b8"/><path d="M3 4h7M3 6h7M3 8h7M3 10h4" stroke="#4878c0" stroke-width=".9"/><path d="M2 12.500l1.500 1.500 1.500-1.500 1.500 1.500 1.500-1.500 1.500 1.500 1.500-1.500" stroke="#3868b0" fill="none"/></svg>
<span style='position:absolute;white-space:pre;left:64.6px;font:normal 12px/1 "Liberation Sans","Noto Sans CJK SC",sans-serif;color:#000;top:145.34px;letter-spacing:-0.188px;'>class</span>
<span style='position:absolute;white-space:pre;left:101px;font:normal 12px/1 "Liberation Sans","Noto Sans CJK SC",sans-serif;color:#000;top:145.34px;letter-spacing:-0.349px;'>(cl</span>
<span style='position:absolute;white-space:pre;left:118.4px;font:normal 12px/1 "Liberation Sans","Noto Sans CJK SC",sans-serif;color:#000;top:145.34px;letter-spacing:0.216px;'>Tab)</span>
<div style="position:absolute;left:34px;top:171px;width:10px;height:1px;background:repeating-linear-gradient(to right,#707070 0 1px,transparent 1px 2px);"></div>
<svg style="position:absolute;left:44.5px;top:164px" width="14.5" height="15.5" viewBox="0 0 14 15"><path d="M1.500 1.500h10v11h-10z" fill="#f0f6fd" stroke="#6888b8"/><path d="M3 4h7M3 6h7M3 8h7M3 10h4" stroke="#4878c0" stroke-width=".9"/><path d="M2 12.500l1.500 1.500 1.500-1.500 1.500 1.500 1.500-1.500 1.500 1.500 1.500-1.500" stroke="#3868b0" fill="none"/></svg>
<span style='position:absolute;white-space:pre;left:64.6px;font:normal 12px/1 "Liberation Sans","Noto Sans CJK SC",sans-serif;color:#000;top:165.34px;letter-spacing:0.272px;'>connect</span>
<span style='position:absolute;white-space:pre;left:117.6px;font:normal 12px/1 "Liberation Sans","Noto Sans CJK SC",sans-serif;color:#000;top:165.34px;letter-spacing:-0.127px;'>(con</span>
<span style='position:absolute;white-space:pre;left:147px;font:normal 12px/1 "Liberation Sans","Noto Sans CJK SC",sans-serif;color:#000;top:165.34px;letter-spacing:0.302px;'>Tab)</span>
<div style="position:absolute;left:34px;top:191px;width:10px;height:1px;background:repeating-linear-gradient(to right,#707070 0 1px,transparent 1px 2px);"></div>
<svg style="position:absolute;left:44.5px;top:184px" width="14.5" height="15.5" viewBox="0 0 14 15"><path d="M1.500 1.500h10v11h-10z" fill="#f0f6fd" stroke="#6888b8"/><path d="M3 4h7M3 6h7M3 8h7M3 10h4" stroke="#4878c0" stroke-width=".9"/><path d="M2 12.500l1.500 1.500 1.500-1.500 1.500 1.500 1.500-1.500 1.500 1.500 1.500-1.500" stroke="#3868b0" fill="none"/></svg>
<span style='position:absolute;white-space:pre;left:64.6px;font:normal 12px/1 "Liberation Sans","Noto Sans CJK SC",sans-serif;color:#000;top:185.34px;letter-spacing:0.382px;'>disconnect</span>
<span style='position:absolute;white-space:pre;left:134.4px;font:normal 12px/1 "Liberation Sans","Noto Sans CJK SC",sans-serif;color:#000;top:185.34px;letter-spacing:0.073px;'>(dis</span>
<span style='position:absolute;white-space:pre;left:160.1px;font:normal 12px/1 "Liberation Sans","Noto Sans CJK SC",sans-serif;color:#000;top:185.34px;letter-spacing:0.302px;'>Tab)</span>
<div style="position:absolute;left:34px;top:211px;width:10px;height:1px;background:repeating-linear-gradient(to right,#707070 0 1px,transparent 1px 2px);"></div>
<svg style="position:absolute;left:44.5px;top:204px" width="14.5" height="15.5" viewBox="0 0 14 15"><path d="M1.500 1.500h10v11h-10z" fill="#f0f6fd" stroke="#6888b8"/><path d="M3 4h7M3 6h7M3 8h7M3 10h4" stroke="#4878c0" stroke-width=".9"/><path d="M2 12.500l1.500 1.500 1.500-1.500 1.500 1.500 1.500-1.500 1.500 1.500 1.500-1.500" stroke="#3868b0" fill="none"/></svg>
<span style='position:absolute;white-space:pre;left:64.6px;font:normal 12px/1 "Liberation Sans","Noto Sans CJK SC",sans-serif;color:#000;top:205.34px;letter-spacing:0.827px;'>do</span>
<span style='position:absolute;white-space:pre;left:89.3px;font:normal 12px/1 "Liberation Sans","Noto Sans CJK SC",sans-serif;color:#000;top:205.34px;letter-spacing:0.263px;'>(do</span>
<span style='position:absolute;white-space:pre;left:114px;font:normal 12px/1 "Liberation Sans","Noto Sans CJK SC",sans-serif;color:#000;top:205.34px;letter-spacing:0.073px;'>Tab)</span>
<div style="position:absolute;left:34px;top:231px;width:10px;height:1px;background:repeating-linear-gradient(to right,#707070 0 1px,transparent 1px 2px);"></div>
<svg style="position:absolute;left:44.5px;top:224px" width="14.5" height="15.5" viewBox="0 0 14 15"><path d="M1.500 1.500h10v11h-10z" fill="#f0f6fd" stroke="#6888b8"/><path d="M3 4h7M3 6h7M3 8h7M3 10h4" stroke="#4878c0" stroke-width=".9"/><path d="M2 12.500l1.500 1.500 1.500-1.500 1.500 1.500 1.500-1.500 1.500 1.500 1.500-1.500" stroke="#3868b0" fill="none"/></svg>
<span style='position:absolute;white-space:pre;left:64.6px;font:normal 12px/1 "Liberation Sans","Noto Sans CJK SC",sans-serif;color:#000;top:225.34px;letter-spacing:0.674px;'>for</span>
<span style='position:absolute;white-space:pre;left:89.3px;font:normal 12px/1 "Liberation Sans","Noto Sans CJK SC",sans-serif;color:#000;top:225.34px;letter-spacing:0.314px;'>(for</span>
<span style='position:absolute;white-space:pre;left:115.2px;font:normal 12px/1 "Liberation Sans","Noto Sans CJK SC",sans-serif;color:#000;top:225.34px;letter-spacing:0.245px;'>Tab)</span>
<div style="position:absolute;left:34px;top:251px;width:10px;height:1px;background:repeating-linear-gradient(to right,#707070 0 1px,transparent 1px 2px);"></div>
<svg style="position:absolute;left:44.5px;top:244px" width="14.5" height="15.5" viewBox="0 0 14 15"><path d="M1.500 1.500h10v11h-10z" fill="#f0f6fd" stroke="#6888b8"/><path d="M3 4h7M3 6h7M3 8h7M3 10h4" stroke="#4878c0" stroke-width=".9"/><path d="M2 12.500l1.500 1.500 1.500-1.500 1.500 1.500 1.500-1.500 1.500 1.500 1.500-1.500" stroke="#3868b0" fill="none"/></svg>
<span style='position:absolute;white-space:pre;left:64.6px;font:normal 12px/1 "Liberation Sans","Noto Sans CJK SC",sans-serif;color:#000;top:245.34px;letter-spacing:0.411px;'>foreach</span>
<span style='position:absolute;white-space:pre;left:117px;font:normal 12px/1 "Liberation Sans","Noto Sans CJK SC",sans-serif;color:#000;top:245.34px;letter-spacing:0.394px;'>(fe</span>
<span style='position:absolute;white-space:pre;left:137.6px;font:normal 12px/1 "Liberation Sans","Noto Sans CJK SC",sans-serif;color:#000;top:245.34px;letter-spacing:-0.041px;'>Tab)</span>
<div style="position:absolute;left:34px;top:271px;width:10px;height:1px;background:repeating-linear-gradient(to right,#707070 0 1px,transparent 1px 2px);"></div>
<svg style="position:absolute;left:44.5px;top:264px" width="14.5" height="15.5" viewBox="0 0 14 15"><path d="M1.500 1.500h10v11h-10z" fill="#f0f6fd" stroke="#6888b8"/><path d="M3 4h7M3 6h7M3 8h7M3 10h4" stroke="#4878c0" stroke-width=".9"/><path d="M2 12.500l1.500 1.500 1.500-1.500 1.500 1.500 1.500-1.500 1.500 1.500 1.500-1.500" stroke="#3868b0" fill="none"/></svg>
<span style='position:absolute;white-space:pre;left:64.6px;font:normal 12px/1 "Liberation Sans","Noto Sans CJK SC",sans-serif;color:#000;top:265.34px;letter-spacing:0.921px;'>fprintf</span>
<span style='position:absolute;white-space:pre;left:105px;font:normal 12px/1 "Liberation Sans","Noto Sans CJK SC",sans-serif;color:#000;top:265.34px;letter-spacing:-0.846px;'>...</span>
<span style='position:absolute;white-space:pre;left:121.9px;font:normal 12px/1 "Liberation Sans","Noto Sans CJK SC",sans-serif;color:#000;top:265.34px;letter-spacing:0.705px;'>(fprintf</span>
<span style='position:absolute;white-space:pre;left:166.4px;font:normal 12px/1 "Liberation Sans","Noto Sans CJK SC",sans-serif;color:#000;top:265.34px;letter-spacing:-0.070px;'>Tab)</span>
<div style="position:absolute;left:34px;top:291px;width:10px;height:1px;background:repeating-linear-gradient(to right,#707070 0 1px,transparent 1px 2px);"></div>
<svg style="position:absolute;left:44.5px;top:284px" width="14.5" height="15.5" viewBox="0 0 14 15"><path d="M1.500 1.500h10v11h-10z" fill="#f0f6fd" stroke="#6888b8"/><path d="M3 4h7M3 6h7M3 8h7M3 10h4" stroke="#4878c0" stroke-width=".9"/><path d="M2 12.500l1.500 1.500 1.500-1.500 1.500 1.500 1.500-1.500 1.500 1.500 1.500-1.500" stroke="#3868b0" fill="none"/></svg>
<span style='position:absolute;white-space:pre;left:64.6px;font:normal 12px/1 "Liberation Sans","Noto Sans CJK SC",sans-serif;color:#000;top:285.34px;letter-spacing:-0.267px;'>if</span>
<span style='position:absolute;white-space:pre;left:79.7px;font:normal 12px/1 "Liberation Sans","Noto Sans CJK SC",sans-serif;color:#000;top:285.34px;letter-spacing:0.280px;'>(if</span>
<span style='position:absolute;white-space:pre;left:96px;font:normal 12px/1 "Liberation Sans","Noto Sans CJK SC",sans-serif;color:#000;top:285.34px;letter-spacing:0.073px;'>Tab)</span>
<div style="position:absolute;left:34px;top:311px;width:10px;height:1px;background:repeating-linear-gradient(to right,#707070 0 1px,transparent 1px 2px);"></div>
<svg style="position:absolute;left:44.5px;top:304px" width="14.5" height="15.5" viewBox="0 0 14 15"><path d="M1.500 1.500h10v11h-10z" fill="#f0f6fd" stroke="#6888b8"/><path d="M3 4h7M3 6h7M3 8h7M3 10h4" stroke="#4878c0" stroke-width=".9"/><path d="M2 12.500l1.500 1.500 1.500-1.500 1.500 1.500 1.500-1.500 1.500 1.500 1.500-1.500" stroke="#3868b0" fill="none"/></svg>
<span style='position:absolute;white-space:pre;left:64.6px;font:normal 12px/1 "Liberation Sans","Noto Sans CJK SC",sans-serif;color:#000;top:305.34px;letter-spacing:0.143px;'>main()</span>
<span style='position:absolute;white-space:pre;left:108.9px;font:normal 12px/1 "Liberation Sans","Noto Sans CJK SC",sans-serif;color:#000;top:305.34px;letter-spacing:0.108px;'>(main</span>
<span style='position:absolute;white-space:pre;left:145.5px;font:normal 12px/1 "Liberation Sans","Noto Sans CJK SC",sans-serif;color:#000;top:305.34px;letter-spacing:0.188px;'>Tab)</span>
<div style="position:absolute;left:34px;top:331px;width:10px;height:1px;background:repeating-linear-gradient(to right,#707070 0 1px,transparent 1px 2px);"></div>
<svg style="position:absolute;left:44.5px;top:324px" width="14.5" height="15.5" viewBox="0 0 14 15"><path d="M1.500 1.500h10v11h-10z" fill="#f0f6fd" stroke="#6888b8"/><path d="M3 4h7M3 6h7M3 8h7M3 10h4" stroke="#4878c0" stroke-width=".9"/><path d="M2 12.500l1.500 1.500 1.500-1.500 1.500 1.500 1.500-1.500 1.500 1.500 1.500-1.500" stroke="#3868b0" fill="none"/></svg>
<span style='position:absolute;white-space:pre;left:64.6px;font:normal 12px/1 "Liberation Sans","Noto Sans CJK SC",sans-serif;color:#000;top:325.34px;letter-spacing:0.277px;'>namespace</span>
<span style='position:absolute;white-space:pre;left:138.7px;font:normal 12px/1 "Liberation Sans","Noto Sans CJK SC",sans-serif;color:#000;top:325.34px;letter-spacing:-0.349px;'>(ns</span>
<span style='position:absolute;white-space:pre;left:160.5px;font:normal 12px/1 "Liberation Sans","Noto Sans CJK SC",sans-serif;color:#000;top:325.34px;letter-spacing:0.130px;'>Tab)</span>
<div style="position:absolute;left:34px;top:351px;width:10px;height:1px;background:repeating-linear-gradient(to right,#707070 0 1px,transparent 1px 2px);"></div>
<svg style="position:absolute;left:44.5px;top:344px" width="14.5" height="15.5" viewBox="0 0 14 15"><path d="M1.500 1.500h10v11h-10z" fill="#f0f6fd" stroke="#6888b8"/><path d="M3 4h7M3 6h7M3 8h7M3 10h4" stroke="#4878c0" stroke-width=".9"/><path d="M2 12.500l1.500 1.500 1.500-1.500 1.500 1.500 1.500-1.500 1.500 1.500 1.500-1.500" stroke="#3868b0" fill="none"/></svg>
<span style='position:absolute;white-space:pre;left:64.6px;font:normal 12px/1 "Liberation Sans","Noto Sans CJK SC",sans-serif;color:#000;top:345.34px;letter-spacing:0.602px;'>printf</span>
<span style='position:absolute;white-space:pre;left:100px;font:normal 12px/1 "Liberation Sans","Noto Sans CJK SC",sans-serif;color:#000;top:345.34px;letter-spacing:-0.806px;'>...</span>
<span style='position:absolute;white-space:pre;left:117.6px;font:normal 12px/1 "Liberation Sans","Noto Sans CJK SC",sans-serif;color:#000;top:345.34px;letter-spacing:0.633px;'>(printf</span>
<span style='position:absolute;white-space:pre;left:156.9px;font:normal 12px/1 "Liberation Sans","Noto Sans CJK SC",sans-serif;color:#000;top:345.34px;letter-spacing:0.302px;'>Tab)</span>
<div style="position:absolute;left:34px;top:371px;width:10px;height:1px;background:repeating-linear-gradient(to right,#707070 0 1px,transparent 1px 2px);"></div>
<svg style="position:absolute;left:44.5px;top:364px" width="14.5" height="15.5" viewBox="0 0 14 15"><path d="M1.500 1.500h10v11h-10z" fill="#f0f6fd" stroke="#6888b8"/><path d="M3 4h7M3 6h7M3 8h7M3 10h4" stroke="#4878c0" stroke-width=".9"/><path d="M2 12.500l1.500 1.500 1.500-1.500 1.500 1.500 1.500-1.500 1.500 1.500 1.500-1.500" stroke="#3868b0" fill="none"/></svg>
<span style='position:absolute;white-space:pre;left:64.6px;font:normal 12px/1 "Liberation Sans","Noto Sans CJK SC",sans-serif;color:#000;top:365.34px;letter-spacing:-0.082px;'>Read</span>
<span style='position:absolute;white-space:pre;left:98.3px;font:normal 12px/1 "Liberation Sans","Noto Sans CJK SC",sans-serif;color:#000;top:365.34px;letter-spacing:-0.470px;'>File</span>
<span style='position:absolute;white-space:pre;left:121.3px;font:normal 12px/1 "Liberation Sans","Noto Sans CJK SC",sans-serif;color:#000;top:365.34px;letter-spacing:0.424px;'>Into</span>
<span style='position:absolute;white-space:pre;left:148px;font:normal 12px/1 "Liberation Sans","Noto Sans CJK SC",sans-serif;color:#000;top:365.34px;letter-spacing:0.685px;'>Vector</span>
<div style="position:absolute;left:34px;top:391px;width:10px;height:1px;background:repeating-linear-gradient(to right,#707070 0 1px,transparent 1px 2px);"></div>
<svg style="position:absolute;left:44.5px;top:384px" width="14.5" height="15.5" viewBox="0 0 14 15"><path d="M1.500 1.500h10v11h-10z" fill="#f0f6fd" stroke="#6888b8"/><path d="M3 4h7M3 6h7M3 8h7M3 10h4" stroke="#4878c0" stroke-width=".9"/><path d="M2 12.500l1.500 1.500 1.500-1.500 1.500 1.500 1.500-1.500 1.500 1.500 1.500-1.500" stroke="#3868b0" fill="none"/></svg>
<span style='position:absolute;white-space:pre;left:64.6px;font:normal 12px/1 "Liberation Sans","Noto Sans CJK SC",sans-serif;color:#000;top:385.34px;letter-spacing:0.289px;'>std::map</span>
<span style='position:absolute;white-space:pre;left:122.4px;font:normal 12px/1 "Liberation Sans","Noto Sans CJK SC",sans-serif;color:#000;top:385.34px;letter-spacing:0.588px;'>(map</span>
<span style='position:absolute;white-space:pre;left:156.9px;font:normal 12px/1 "Liberation Sans","Noto Sans CJK SC",sans-serif;color:#000;top:385.34px;letter-spacing:0.302px;'>Tab)</span>
<div style="position:absolute;left:34px;top:411px;width:10px;height:1px;background:repeating-linear-gradient(to right,#707070 0 1px,transparent 1px 2px);"></div>
<svg style="position:absolute;left:44.5px;top:404px" width="14.5" height="15.5" viewBox="0 0 14 15"><path d="M1.500 1.500h10v11h-10z" fill="#f0f6fd" stroke="#6888b8"/><path d="M3 4h7M3 6h7M3 8h7M3 10h4" stroke="#4878c0" stroke-width=".9"/><path d="M2 12.500l1.500 1.500 1.500-1.500 1.500 1.500 1.500-1.500 1.500 1.500 1.500-1.500" stroke="#3868b0" fill="none"/></svg>
<span style='position:absolute;white-space:pre;left:64.6px;font:normal 12px/1 "Liberation Sans","Noto Sans CJK SC",sans-serif;color:#000;top:405.34px;letter-spacing:0.309px;'>std::vector</span>
<span style='position:absolute;white-space:pre;left:132.8px;font:normal 12px/1 "Liberation Sans","Noto Sans CJK SC",sans-serif;color:#000;top:405.34px;letter-spacing:0.233px;'>(vector</span>
<span style='position:absolute;white-space:pre;left:177px;font:normal 12px/1 "Liberation Sans","Noto Sans CJK SC",sans-serif;color:#000;top:405.34px;letter-spacing:0.045px;'>Tab)</span>
<div style="position:absolute;left:34px;top:431px;width:10px;height:1px;background:repeating-linear-gradient(to right,#707070 0 1px,transparent 1px 2px);"></div>
<svg style="position:absolute;left:44.5px;top:424px" width="14.5" height="15.5" viewBox="0 0 14 15"><path d="M1.500 1.500h10v11h-10z" fill="#f0f6fd" stroke="#6888b8"/><path d="M3 4h7M3 6h7M3 8h7M3 10h4" stroke="#4878c0" stroke-width=".9"/><path d="M2 12.500l1.500 1.500 1.500-1.500 1.500 1.500 1.500-1.500 1.500 1.500 1.500-1.500" stroke="#3868b0" fill="none"/></svg>
<span style='position:absolute;white-space:pre;left:64.6px;font:normal 12px/1 "Liberation Sans","Noto Sans CJK SC",sans-serif;color:#000;top:425.34px;letter-spacing:0.374px;'>struct</span>
<span style='position:absolute;white-space:pre;left:101px;font:normal 12px/1 "Liberation Sans","Noto Sans CJK SC",sans-serif;color:#000;top:425.34px;letter-spacing:1.062px;'>(st</span>
<span style='position:absolute;white-space:pre;left:123px;font:normal 12px/1 "Liberation Sans","Noto Sans CJK SC",sans-serif;color:#000;top:425.34px;letter-spacing:0.188px;'>Tab)</span>
</div>
<div style="position:absolute;left:193px;top:153px;width:17px;height:429px;background:#f0f0f0;"></div>
<div style="position:absolute;left:193px;top:260px;width:15px;height:155px;background:#cdcdcd;"></div>
<svg style="position:absolute;left:196px;top:160px" width="10" height="7" viewBox="0 0 10 7"><path d="M1.800 5.500l3.200-3.300 3.200 3.300" fill="none" stroke="#404040" stroke-width="1.800"/></svg>
<svg style="position:absolute;left:196px;top:569px" width="10" height="7" viewBox="0 0 10 7"><path d="M1.800 1.500l3.200 3.300 3.200-3.300" fill="none" stroke="#404040" stroke-width="1.800"/></svg>
<div style="position:absolute;left:2.5px;top:582px;width:207.5px;height:17px;background:#f0f0f0;"></div>
<div style="position:absolute;left:20.5px;top:582.5px;width:103.5px;height:14px;background:#cdcdcd;"></div>
<div style="position:absolute;left:2.5px;top:596.5px;width:190.5px;height:2.5px;background:#fff;"></div>
<svg style="position:absolute;left:7.500px;top:584.500px" width="7" height="10" viewBox="0 0 7 10"><path d="M5.300 1.800l-3.300 3.200 3.300 3.200" fill="none" stroke="#404040" stroke-width="1.800"/></svg>
<svg style="position:absolute;left:179.500px;top:584.500px" width="7" height="10" viewBox="0 0 7 10"><path d="M1.700 1.800l3.300 3.200-3.300 3.200" fill="none" stroke="#404040" stroke-width="1.800"/></svg>
<div style="position:absolute;left:213.5px;top:129px;width:97.5px;height:25px;background:#fff;"></div>
<div style="position:absolute;left:214px;top:154px;width:682px;height:445px;background:#fff;"></div>
<svg style="position:absolute;left:221px;top:133.5px" width="16" height="16" viewBox="0 0 16 16"><path d="M2.500 .5h8l3 3v12h-11z" fill="#fdfdfd" stroke="#8a8a8a"/><path d="M10.500 .5v3h3" fill="none" stroke="#8a8a8a"/><path d="M4.500 5.500h7M4.500 7.500h7M4.500 9.500h7M4.500 11.500h7M4.500 13.500h7" stroke="#b4b4b4" stroke-width=".8"/></svg>
<span style='position:absolute;white-space:pre;left:243.5px;font:normal 13px/1 "Liberation Sans","Noto Sans CJK SC",sans-serif;color:#000;top:135.00px;letter-spacing:0.103px;'>dup.txt</span>
<svg style="position:absolute;left:294px;top:138.500px" width="9" height="9" viewBox="0 0 9 9"><path d="M.5 .5l8 8M8.500 .5l-8 8" stroke="#9a9a9a" stroke-width="1.300"/></svg>
<div style="position:absolute;left:217px;top:157px;width:674px;height:436.500px;background:#2c2d26;overflow:hidden;box-shadow:inset 1px 1px 0 #55564e">
<span style='position:absolute;white-space:pre;left:10.3px;font:normal 16px/1 "Liberation Sans","Noto Sans CJK SC",sans-serif;color:#f5f5ec;top:7.46px;letter-spacing:-0.028px;'>00007FF84DD63670</span>
<div style="position:absolute;left:166px;top:7px;width:2px;height:17.5px;background:#e2dcbc;"></div>
<span style='position:absolute;white-space:pre;left:175px;font:normal 16px/1 "Liberation Sans","Noto Sans CJK SC",sans-serif;color:#f5f5ec;top:7.46px;letter-spacing:-0.013px;'>8B 14 25 30 03 FE 7F</span>
<div style="position:absolute;left:407px;top:7px;width:2px;height:17.5px;background:#e2dcbc;"></div>
<span style='position:absolute;white-space:pre;left:415.8px;font:bold 16px/1 "Liberation Sans","Noto Sans CJK SC",sans-serif;color:#d9987e;top:7.46px;letter-spacing:-0.282px;-webkit-text-stroke:0.3px #d9987e;'>mov</span>
<span style='position:absolute;white-space:pre;left:453.8px;font:bold 16px/1 "Liberation Sans","Noto Sans CJK SC",sans-serif;color:#ef7fd2;top:7.46px;letter-spacing:-0.551px;-webkit-text-stroke:0.3px #ef7fd2;'>edx</span>
<span style='position:absolute;white-space:pre;left:480px;font:normal 16px/1 "Liberation Sans","Noto Sans CJK SC",sans-serif;color:#f5f5ec;top:7.46px;letter-spacing:0.890px;'>,dword ptr</span>
<span style='position:absolute;white-space:pre;left:10.3px;font:normal 16px/1 "Liberation Sans","Noto Sans CJK SC",sans-serif;color:#f5f5ec;top:32.46px;letter-spacing:-0.220px;'>ds:[7FFE0330]</span>
<div style="position:absolute;left:160px;top:32px;width:2px;height:17.5px;background:#e2dcbc;"></div>
<svg style="position:absolute;left:163px;top:33px" width="8" height="15" viewBox="0 0 8 15"><path d="M4 0v14M.8 9.500l3.200 4.500 3.200-4.500" fill="none" stroke="#2f6fd0" stroke-width="1.300"/></svg>
<span style='position:absolute;white-space:pre;left:10.3px;font:normal 16px/1 "Liberation Sans","Noto Sans CJK SC",sans-serif;color:#f5f5ec;top:57.46px;letter-spacing:-0.028px;'>00007FF84DD63677</span>
<div style="position:absolute;left:166px;top:57px;width:2px;height:17.5px;background:#e2dcbc;"></div>
<span style='position:absolute;white-space:pre;left:175px;font:normal 16px/1 "Liberation Sans","Noto Sans CJK SC",sans-serif;color:#f5f5ec;top:57.46px;letter-spacing:-0.176px;'>8D 4E 40</span>
<div style="position:absolute;left:377px;top:57px;width:2px;height:17.5px;background:#e2dcbc;"></div>
<span style='position:absolute;white-space:pre;left:385.4px;font:bold 16px/1 "Liberation Sans","Noto Sans CJK SC",sans-serif;color:#d9987e;top:57.46px;letter-spacing:-0.540px;-webkit-text-stroke:0.3px #d9987e;'>lea</span>
<span style='position:absolute;white-space:pre;left:412px;font:bold 16px/1 "Liberation Sans","Noto Sans CJK SC",sans-serif;color:#ef7fd2;top:57.46px;letter-spacing:-0.401px;-webkit-text-stroke:0.3px #ef7fd2;'>ecx</span>
<span style='position:absolute;white-space:pre;left:437.7px;font:normal 16px/1 "Liberation Sans","Noto Sans CJK SC",sans-serif;color:#f5f5ec;top:57.46px;letter-spacing:0.754px;'>,dword ptr</span>
<span style='position:absolute;white-space:pre;left:10.3px;font:normal 16px/1 "Liberation Sans","Noto Sans CJK SC",sans-serif;color:#f5f5ec;top:82.46px;letter-spacing:0.308px;'>ds:[rsi+40]</span>
<div style="position:absolute;left:144px;top:82px;width:2px;height:17.5px;background:#e2dcbc;"></div>
<svg style="position:absolute;left:147.7px;top:83px" width="8" height="15" viewBox="0 0 8 15"><path d="M4 0v14M.8 9.500l3.200 4.500 3.200-4.500" fill="none" stroke="#2f6fd0" stroke-width="1.300"/></svg>
<span style='position:absolute;white-space:pre;left:10.3px;font:normal 16px/1 "Liberation Sans","Noto Sans CJK SC",sans-serif;color:#f5f5ec;top:107.46px;letter-spacing:0.031px;'>00007FF84DD6367A</span>
<div style="position:absolute;left:168px;top:107px;width:2px;height:17.5px;background:#e2dcbc;"></div>
<span style='position:absolute;white-space:pre;left:177.2px;font:normal 16px/1 "Liberation Sans","Noto Sans CJK SC",sans-serif;color:#f5f5ec;top:107.46px;letter-spacing:-0.460px;'>8B C2</span>
<div style="position:absolute;left:371px;top:107px;width:2px;height:17.5px;background:#e2dcbc;"></div>
<span style='position:absolute;white-space:pre;left:379.8px;font:bold 16px/1 "Liberation Sans","Noto Sans CJK SC",sans-serif;color:#d9987e;top:107.46px;letter-spacing:-0.002px;-webkit-text-stroke:0.3px #d9987e;'>mov</span>
<span style='position:absolute;white-space:pre;left:417.6px;font:bold 16px/1 "Liberation Sans","Noto Sans CJK SC",sans-serif;color:#ef7fd2;top:107.46px;letter-spacing:-0.521px;-webkit-text-stroke:0.3px #ef7fd2;'>eax</span>
<span style='position:absolute;white-space:pre;left:443px;font:normal 16px/1 "Liberation Sans","Noto Sans CJK SC",sans-serif;color:#f5f5ec;top:107.46px;'>,</span>
<span style='position:absolute;white-space:pre;left:448px;font:bold 16px/1 "Liberation Sans","Noto Sans CJK SC",sans-serif;color:#ef7fd2;top:107.46px;letter-spacing:-0.471px;-webkit-text-stroke:0.3px #ef7fd2;'>edx</span>
<div style="position:absolute;left:620px;top:107px;width:2px;height:17.5px;background:#e2dcbc;"></div>
<svg style="position:absolute;left:623.5px;top:108px" width="8" height="15" viewBox="0 0 8 15"><path d="M4 0v14M.8 9.500l3.200 4.500 3.200-4.500" fill="none" stroke="#2f6fd0" stroke-width="1.300"/></svg>
<span style='position:absolute;white-space:pre;left:10.3px;font:normal 16px/1 "Liberation Sans","Noto Sans CJK SC",sans-serif;color:#f5f5ec;top:132.46px;letter-spacing:-0.025px;'>00007FF84DD6367C</span>
<div style="position:absolute;left:168px;top:132px;width:2px;height:17.5px;background:#e2dcbc;"></div>
<span style='position:absolute;white-space:pre;left:177.2px;font:normal 16px/1 "Liberation Sans","Noto Sans CJK SC",sans-serif;color:#f5f5ec;top:132.46px;letter-spacing:-0.035px;'>BB 01 00 00 C0</span>
<div style="position:absolute;left:396px;top:132px;width:2px;height:17.5px;background:#e2dcbc;"></div>
<span style='position:absolute;white-space:pre;left:404.4px;font:bold 16px/1 "Liberation Sans","Noto Sans CJK SC",sans-serif;color:#d9987e;top:132.46px;letter-spacing:0.158px;-webkit-text-stroke:0.3px #d9987e;'>mov</span>
<span style='position:absolute;white-space:pre;left:10.3px;font:bold 16px/1 "Liberation Sans","Noto Sans CJK SC",sans-serif;color:#ef7fd2;top:157.46px;letter-spacing:-0.471px;-webkit-text-stroke:0.3px #ef7fd2;'>ebx</span>
<span style='position:absolute;white-space:pre;left:36.7px;font:normal 16px/1 "Liberation Sans","Noto Sans CJK SC",sans-serif;color:#f5f5ec;top:157.46px;letter-spacing:-0.164px;'>,C0000001</span>
<div style="position:absolute;left:236px;top:157px;width:2px;height:17.5px;background:#e2dcbc;"></div>
<svg style="position:absolute;left:239.7px;top:158px" width="8" height="15" viewBox="0 0 8 15"><path d="M4 0v14M.8 9.500l3.200 4.500 3.200-4.500" fill="none" stroke="#2f6fd0" stroke-width="1.300"/></svg>
<span style='position:absolute;white-space:pre;left:10.3px;font:normal 16px/1 "Liberation Sans","Noto Sans CJK SC",sans-serif;color:#f5f5ec;top:182.46px;letter-spacing:-0.080px;'>00007FF84DD63681</span>
<div style="position:absolute;left:166px;top:182px;width:2px;height:17.5px;background:#e2dcbc;"></div>
<span style='position:absolute;white-space:pre;left:175px;font:normal 16px/1 "Liberation Sans","Noto Sans CJK SC",sans-serif;color:#f5f5ec;top:182.46px;letter-spacing:-0.432px;'>83 E0 3F</span>
<div style="position:absolute;left:374px;top:182px;width:2px;height:17.5px;background:#e2dcbc;"></div>
<span style='position:absolute;white-space:pre;left:382.4px;font:bold 16px/1 "Liberation Sans","Noto Sans CJK SC",sans-serif;color:#d9987e;top:182.46px;letter-spacing:0.139px;-webkit-text-stroke:0.3px #d9987e;'>and</span>
<span style='position:absolute;white-space:pre;left:416.9px;font:bold 16px/1 "Liberation Sans","Noto Sans CJK SC",sans-serif;color:#ef7fd2;top:182.46px;letter-spacing:-0.561px;-webkit-text-stroke:0.3px #ef7fd2;'>eax</span>
<span style='position:absolute;white-space:pre;left:442.2px;font:normal 16px/1 "Liberation Sans","Noto Sans CJK SC",sans-serif;color:#f5f5ec;top:182.46px;letter-spacing:-0.450px;'>,3F</span>
<div style="position:absolute;left:616px;top:182px;width:2px;height:17.5px;background:#e2dcbc;"></div>
<svg style="position:absolute;left:619.3px;top:183px" width="8" height="15" viewBox="0 0 8 15"><path d="M4 0v14M.8 9.500l3.200 4.500 3.200-4.500" fill="none" stroke="#2f6fd0" stroke-width="1.300"/></svg>
<span style='position:absolute;white-space:pre;left:10.3px;font:normal 16px/1 "Liberation Sans","Noto Sans CJK SC",sans-serif;color:#f5f5ec;top:207.46px;letter-spacing:-0.028px;'>00007FF84DD63684</span>
<div style="position:absolute;left:166px;top:207px;width:2px;height:17.5px;background:#e2dcbc;"></div>
<span style='position:absolute;white-space:pre;left:175px;font:normal 16px/1 "Liberation Sans","Noto Sans CJK SC",sans-serif;color:#f5f5ec;top:207.46px;letter-spacing:-0.215px;'>2B C8</span>
<div style="position:absolute;left:369px;top:207px;width:2px;height:17.5px;background:#e2dcbc;"></div>
<span style='position:absolute;white-space:pre;left:377px;font:bold 16px/1 "Liberation Sans","Noto Sans CJK SC",sans-serif;color:#d9987e;top:207.46px;letter-spacing:-0.421px;-webkit-text-stroke:0.3px #d9987e;'>sub</span>
<span style='position:absolute;white-space:pre;left:409px;font:bold 16px/1 "Liberation Sans","Noto Sans CJK SC",sans-serif;color:#ef7fd2;top:207.46px;letter-spacing:-0.401px;-webkit-text-stroke:0.3px #ef7fd2;'>ecx</span>
<span style='position:absolute;white-space:pre;left:434.7px;font:normal 16px/1 "Liberation Sans","Noto Sans CJK SC",sans-serif;color:#f5f5ec;top:207.46px;'>,</span>
<span style='position:absolute;white-space:pre;left:439.5px;font:bold 16px/1 "Liberation Sans","Noto Sans CJK SC",sans-serif;color:#ef7fd2;top:207.46px;letter-spacing:-0.801px;-webkit-text-stroke:0.3px #ef7fd2;'>eax</span>
<div style="position:absolute;left:610px;top:207px;width:2px;height:17.5px;background:#e2dcbc;"></div>
<svg style="position:absolute;left:613.7px;top:208px" width="8" height="15" viewBox="0 0 8 15"><path d="M4 0v14M.8 9.500l3.200 4.500 3.200-4.500" fill="none" stroke="#2f6fd0" stroke-width="1.300"/></svg>
<span style='position:absolute;white-space:pre;left:10.3px;font:normal 16px/1 "Liberation Sans","Noto Sans CJK SC",sans-serif;color:#f5f5ec;top:232.46px;letter-spacing:-0.028px;'>00007FF84DD63686</span>
<div style="position:absolute;left:166px;top:232px;width:2px;height:17.5px;background:#e2dcbc;"></div>
<span style='position:absolute;white-space:pre;left:175px;font:normal 16px/1 "Liberation Sans","Noto Sans CJK SC",sans-serif;color:#f5f5ec;top:232.46px;letter-spacing:-0.215px;'>8B C2</span>
<div style="position:absolute;left:369px;top:232px;width:2px;height:17.5px;background:#e2dcbc;"></div>
<span style='position:absolute;white-space:pre;left:377px;font:bold 16px/1 "Liberation Sans","Noto Sans CJK SC",sans-serif;color:#d9987e;top:232.46px;letter-spacing:0.357px;-webkit-text-stroke:0.3px #d9987e;'>mov</span>
<span style='position:absolute;white-space:pre;left:415.7px;font:bold 16px/1 "Liberation Sans","Noto Sans CJK SC",sans-serif;color:#ef7fd2;top:232.46px;letter-spacing:-0.841px;-webkit-text-stroke:0.3px #ef7fd2;'>eax</span>
<span style='position:absolute;white-space:pre;left:440.3px;font:normal 16px/1 "Liberation Sans","Noto Sans CJK SC",sans-serif;color:#f5f5ec;top:232.46px;'>,</span>
<span style='position:absolute;white-space:pre;left:445.3px;font:bold 16px/1 "Liberation Sans","Noto Sans CJK SC",sans-serif;color:#ef7fd2;top:232.46px;letter-spacing:-0.151px;-webkit-text-stroke:0.3px #ef7fd2;'>edx</span>
<div style="position:absolute;left:618px;top:232px;width:2px;height:17.5px;background:#e2dcbc;"></div>
<svg style="position:absolute;left:622px;top:233px" width="8" height="15" viewBox="0 0 8 15"><path d="M4 0v14M.8 9.500l3.200 4.500 3.200-4.500" fill="none" stroke="#2f6fd0" stroke-width="1.300"/></svg>
<span style='position:absolute;white-space:pre;left:10.3px;font:normal 16px/1 "Liberation Sans","Noto Sans CJK SC",sans-serif;color:#f5f5ec;top:257.46px;letter-spacing:-0.028px;'>00007FF84DD63688</span>
<div style="position:absolute;left:166px;top:257px;width:2px;height:17.5px;background:#e2dcbc;"></div>
<span style='position:absolute;white-space:pre;left:175px;font:normal 16px/1 "Liberation Sans","Noto Sans CJK SC",sans-serif;color:#f5f5ec;top:257.46px;letter-spacing:-0.039px;'>49 D3 C8</span>
<div style="position:absolute;left:378px;top:257px;width:2px;height:17.5px;background:#e2dcbc;"></div>
<span style='position:absolute;white-space:pre;left:387.3px;font:bold 16px/1 "Liberation Sans","Noto Sans CJK SC",sans-serif;color:#d9987e;top:257.46px;letter-spacing:-0.534px;-webkit-text-stroke:0.3px #d9987e;'>ror</span>
<span style='position:absolute;white-space:pre;left:414.6px;font:normal 16px/1 "Liberation Sans","Noto Sans CJK SC",sans-serif;color:#f5f5ec;top:257.46px;letter-spacing:-0.163px;'>r8,cl</span>
<div style="position:absolute;left:601px;top:257px;width:2px;height:17.5px;background:#e2dcbc;"></div>
<svg style="position:absolute;left:605px;top:258px" width="8" height="15" viewBox="0 0 8 15"><path d="M4 0v14M.8 9.500l3.200 4.500 3.200-4.500" fill="none" stroke="#2f6fd0" stroke-width="1.300"/></svg>
<span style='position:absolute;white-space:pre;left:10.3px;font:normal 16px/1 "Liberation Sans","Noto Sans CJK SC",sans-serif;color:#f5f5ec;top:282.46px;letter-spacing:-0.085px;'>00007FF84DD6368B</span>
<div style="position:absolute;left:167px;top:282px;width:2px;height:17.5px;background:#e2dcbc;"></div>
<span style='position:absolute;white-space:pre;left:176px;font:normal 16px/1 "Liberation Sans","Noto Sans CJK SC",sans-serif;color:#f5f5ec;top:282.46px;letter-spacing:-0.172px;'>4C 33 C0</span>
<div style="position:absolute;left:378px;top:282px;width:2px;height:17.5px;background:#e2dcbc;"></div>
<span style='position:absolute;white-space:pre;left:387.3px;font:bold 16px/1 "Liberation Sans","Noto Sans CJK SC",sans-serif;color:#d9987e;top:282.46px;letter-spacing:-0.882px;-webkit-text-stroke:0.3px #d9987e;'>xor</span>
<span style='position:absolute;white-space:pre;left:416.5px;font:normal 16px/1 "Liberation Sans","Noto Sans CJK SC",sans-serif;color:#f5f5ec;top:282.46px;letter-spacing:0.126px;'>r8,rax</span>
<div style="position:absolute;left:610px;top:282px;width:2px;height:17.5px;background:#e2dcbc;"></div>
<svg style="position:absolute;left:613.7px;top:283px" width="8" height="15" viewBox="0 0 8 15"><path d="M4 0v14M.8 9.500l3.200 4.500 3.200-4.500" fill="none" stroke="#2f6fd0" stroke-width="1.300"/></svg>
<span style='position:absolute;white-space:pre;left:10.3px;font:normal 16px/1 "Liberation Sans","Noto Sans CJK SC",sans-serif;color:#f5f5ec;top:307.46px;letter-spacing:-0.143px;'>00007FF84DD6368E</span>
<div style="position:absolute;left:166px;top:307px;width:2px;height:17.5px;background:#e2dcbc;"></div>
<span style='position:absolute;white-space:pre;left:175px;font:normal 16px/1 "Liberation Sans","Noto Sans CJK SC",sans-serif;color:#f5f5ec;top:307.46px;letter-spacing:-0.085px;'>4C 89 07</span>
<div style="position:absolute;left:376px;top:307px;width:2px;height:17.5px;background:#e2dcbc;"></div>
<span style='position:absolute;white-space:pre;left:384.7px;font:bold 16px/1 "Liberation Sans","Noto Sans CJK SC",sans-serif;color:#d9987e;top:307.46px;letter-spacing:-0.003px;-webkit-text-stroke:0.3px #d9987e;'>mov</span>
<span style='position:absolute;white-space:pre;left:422.5px;font:normal 16px/1 "Liberation Sans","Noto Sans CJK SC",sans-serif;color:#f5f5ec;top:307.46px;letter-spacing:0.929px;'>qword ptr</span>
<span style='position:absolute;white-space:pre;left:10.3px;font:normal 16px/1 "Liberation Sans","Noto Sans CJK SC",sans-serif;color:#f5f5ec;top:332.46px;letter-spacing:0.315px;'>ds:[rdi],r8</span>
<div style="position:absolute;left:156px;top:332px;width:2px;height:17.5px;background:#e2dcbc;"></div>
<svg style="position:absolute;left:159.5px;top:333px" width="8" height="15" viewBox="0 0 8 15"><path d="M4 0v14M.8 9.500l3.200 4.500 3.200-4.500" fill="none" stroke="#2f6fd0" stroke-width="1.300"/></svg>
<span style='position:absolute;white-space:pre;left:10.3px;font:normal 16px/1 "Liberation Sans","Noto Sans CJK SC",sans-serif;color:#f5f5ec;top:357.46px;letter-spacing:-0.080px;'>00007FF84DD63691</span>
<div style="position:absolute;left:166px;top:357px;width:2px;height:17.5px;background:#e2dcbc;"></div>
<span style='position:absolute;white-space:pre;left:175px;font:normal 16px/1 "Liberation Sans","Noto Sans CJK SC",sans-serif;color:#f5f5ec;top:357.46px;letter-spacing:-0.293px;'>0F 45 DE</span>
<div style="position:absolute;left:377px;top:357px;width:2px;height:17.5px;background:#e2dcbc;"></div>
<span style='position:absolute;white-space:pre;left:385.4px;font:bold 16px/1 "Liberation Sans","Noto Sans CJK SC",sans-serif;color:#d9987e;top:357.46px;letter-spacing:-0.322px;-webkit-text-stroke:0.3px #d9987e;'>cmovne</span>
<span style='position:absolute;white-space:pre;left:449.8px;font:bold 16px/1 "Liberation Sans","Noto Sans CJK SC",sans-serif;color:#ef7fd2;top:357.46px;letter-spacing:-0.151px;-webkit-text-stroke:0.3px #ef7fd2;'>ebx</span>
<span style='position:absolute;white-space:pre;left:477px;font:normal 16px/1 "Liberation Sans","Noto Sans CJK SC",sans-serif;color:#f5f5ec;top:357.46px;'>,</span>
<span style='position:absolute;white-space:pre;left:481.8px;font:bold 16px/1 "Liberation Sans","Noto Sans CJK SC",sans-serif;color:#ef7fd2;top:357.46px;letter-spacing:-0.820px;-webkit-text-stroke:0.3px #ef7fd2;'>esi</span>
<div style="position:absolute;left:11px;top:382px;width:2px;height:17.5px;background:#e2dcbc;"></div>
<svg style="position:absolute;left:14.5px;top:383px" width="8" height="15" viewBox="0 0 8 15"><path d="M4 0v14M.8 9.500l3.200 4.500 3.200-4.500" fill="none" stroke="#2f6fd0" stroke-width="1.300"/></svg>
<span style='position:absolute;white-space:pre;left:10.3px;font:normal 16px/1 "Liberation Sans","Noto Sans CJK SC",sans-serif;color:#f5f5ec;top:407.46px;letter-spacing:-0.028px;'>00007FF84DD63694</span>
<div style="position:absolute;left:166px;top:407px;width:2px;height:17.5px;background:#e2dcbc;"></div>
<span style='position:absolute;white-space:pre;left:175px;font:normal 16px/1 "Liberation Sans","Noto Sans CJK SC",sans-serif;color:#f5f5ec;top:407.46px;letter-spacing:-0.026px;'>E9 48 01 00 00</span>
<div style="position:absolute;left:390px;top:407px;width:2px;height:17.5px;background:#e2dcbc;"></div>
<span style='position:absolute;white-space:pre;left:398.7px;font:bold 16px/1 "Liberation Sans","Noto Sans CJK SC",sans-serif;color:#d9987e;top:407.46px;letter-spacing:0.259px;-webkit-text-stroke:0.3px #d9987e;'>jmp</span>
<span style='position:absolute;white-space:pre;left:12.5px;font:normal 16px/1 "Liberation Sans","Noto Sans CJK SC",sans-serif;color:#f5f5ec;top:432.46px;letter-spacing:-0.053px;'>ntdll.7FF84DD637E1</span>
<div style="position:absolute;left:257px;top:432px;width:2px;height:17.5px;background:#e2dcbc;"></div>
<div style="position:absolute;left:657.5px;top:101px;width:16px;height:33.5px;background:#6a6a6a;"></div>
<svg style="position:absolute;left:660.5px;top:7px" width="10" height="7" viewBox="0 0 10 7"><path d="M1.800 5.500l3.200-3.300 3.200 3.300" fill="none" stroke="#75756c" stroke-width="1.800"/></svg>
<svg style="position:absolute;left:660.5px;top:425px" width="10" height="7" viewBox="0 0 10 7"><path d="M1.800 1.500l3.200 3.300 3.200-3.300" fill="none" stroke="#75756c" stroke-width="1.800"/></svg>
</div>
<div style="position:absolute;left:895px;top:31px;width:2px;height:590.5px;background:#cfeef5;"></div>
<div style="position:absolute;left:1px;top:599px;width:896px;height:22.5px;background:#f0f0f0;"></div>
<div style="position:absolute;left:211px;top:598.5px;width:685px;height:1px;background:#e0e0e0;"></div>
<div style="position:absolute;left:1px;top:599px;width:210px;height:1px;background:#7e7e7e;"></div>
<span style='position:absolute;white-space:pre;left:3.5px;font:normal 12px/1 "Liberation Sans","Noto Sans CJK SC",sans-serif;color:#000;top:606.84px;letter-spacing:0.423px;'>11.4 KB (11,715 字节) , 111 行。</span>
<span style='position:absolute;white-space:pre;left:431px;font:normal 12px/1 "Liberation Sans","Noto Sans CJK SC",sans-serif;color:#000;top:606.84px;letter-spacing:0.464px;'>x86 Assembler</span>
<span style='position:absolute;white-space:pre;left:523.5px;font:normal 12px/1 "Liberation Sans","Noto Sans CJK SC",sans-serif;color:#000;top:606.84px;letter-spacing:0.396px;'>行 7,列 70</span>
<span style='position:absolute;white-space:pre;left:594px;font:normal 12px/1 "Liberation Sans","Noto Sans CJK SC",sans-serif;color:#000;top:606.84px;letter-spacing:-0.003px;'>简体中文(GB2312)</span>
<span style='position:absolute;white-space:pre;left:768.8px;font:normal 12px/1 "Liberation Sans","Noto Sans CJK SC",sans-serif;color:#000;top:606.84px;letter-spacing:0.624px;'>0 字符</span>
<span style='position:absolute;white-space:pre;left:812px;font:normal 12px/1 "Liberation Sans","Noto Sans CJK SC",sans-serif;color:#000;top:606.84px;letter-spacing:0.678px;'>0/111 行</span>
<div style="position:absolute;left:519.3px;top:601px;width:1px;height:20px;background:#dadada;"></div>
<div style="position:absolute;left:588.1px;top:601px;width:1px;height:20px;background:#dadada;"></div>
<div style="position:absolute;left:754.5px;top:601px;width:1px;height:20px;background:#dadada;"></div>
<div style="position:absolute;left:806.5px;top:601px;width:1px;height:20px;background:#dadada;"></div>
<div style="position:absolute;left:876.5px;top:601px;width:1px;height:20px;background:#dadada;"></div>
<svg style="position:absolute;left:884px;top:609px" width="11" height="11" viewBox="0 0 11 11"><g fill="#b8b8b8"><rect x="8" y="0" width="2" height="2"/><rect x="4" y="4" width="2" height="2"/><rect x="8" y="4" width="2" height="2"/><rect x="0" y="8" width="2" height="2"/><rect x="4" y="8" width="2" height="2"/><rect x="8" y="8" width="2" height="2"/></g></svg>
</body></html>
